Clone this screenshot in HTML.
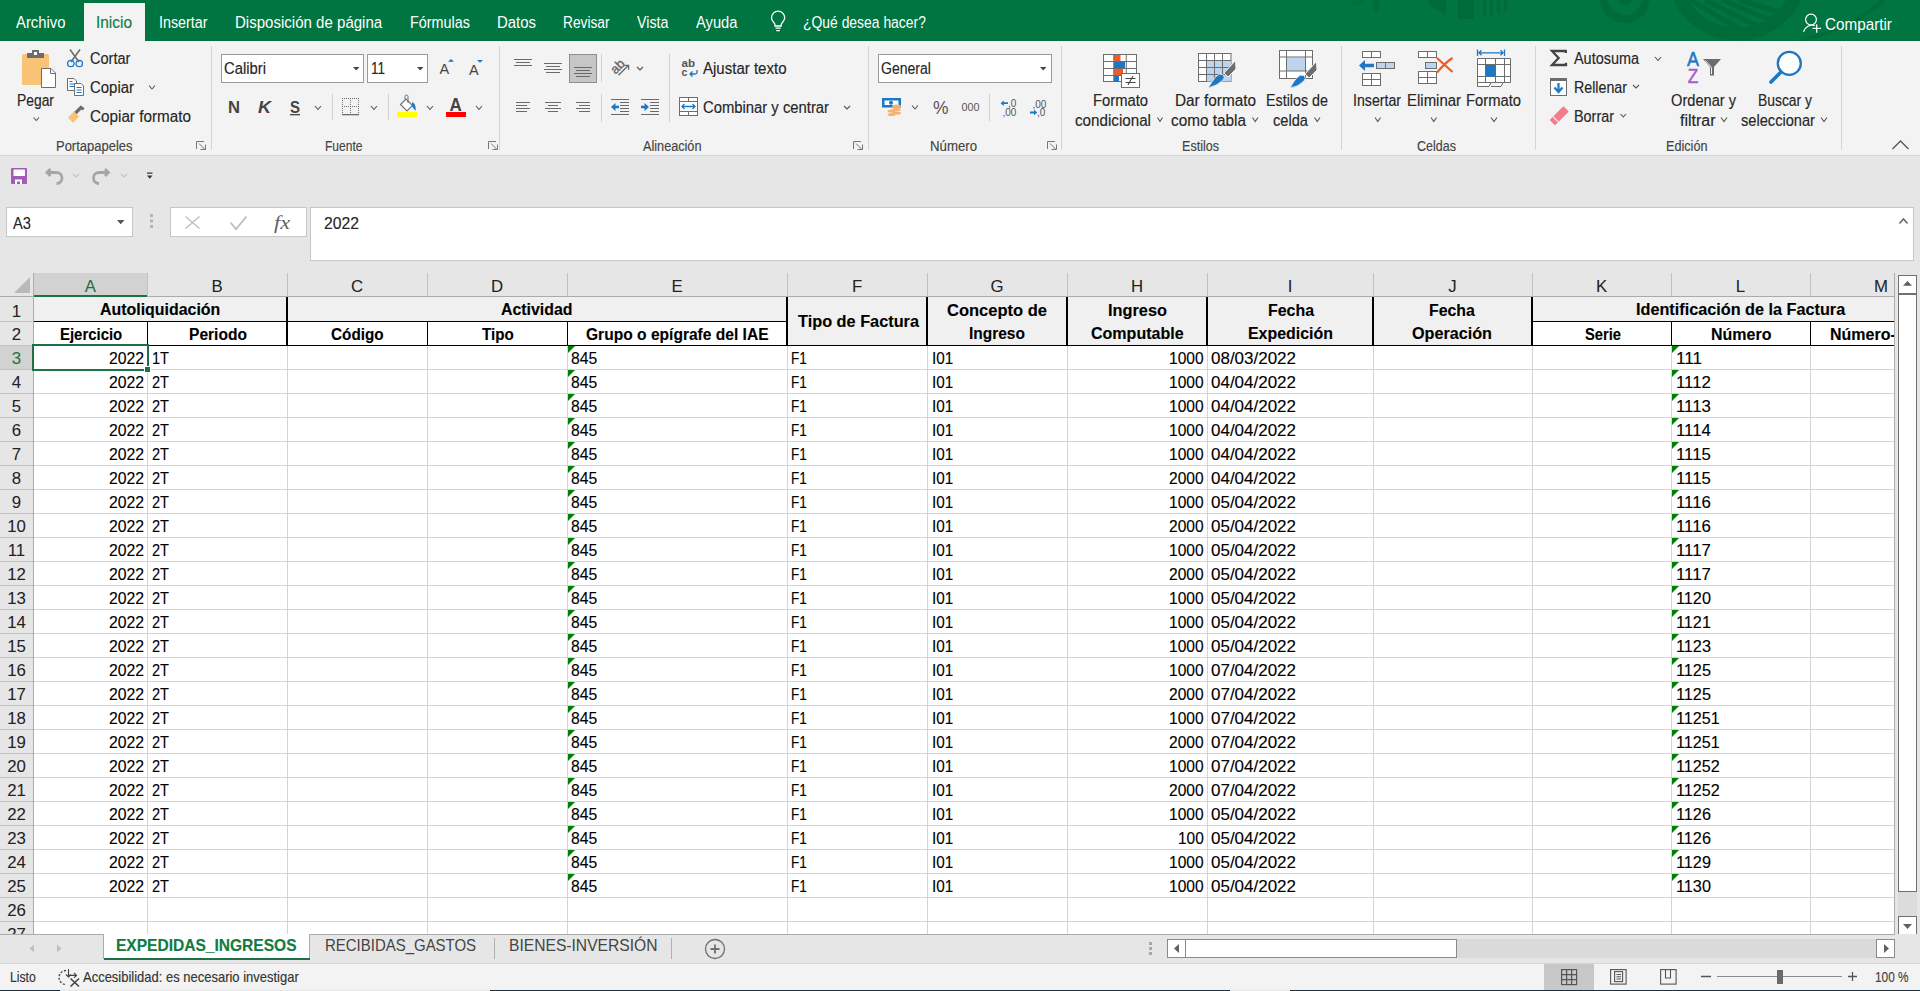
<!DOCTYPE html><html><head><meta charset="utf-8"><style>
html,body{margin:0;padding:0;width:1920px;height:991px;overflow:hidden;background:#e6e6e6;position:relative}
.t{position:absolute;white-space:nowrap;-webkit-text-stroke:0.3px currentColor;font-family:"Liberation Sans",sans-serif;transform-origin:0 0}
svg{position:absolute}
</style></head><body>
<div style="position:absolute;left:0px;top:0px;width:1920px;height:41px;background:#007542;"></div>
<svg style="left:0;top:0" width="1920" height="41"><g fill="none" stroke="#006b3a"><circle cx="1625" cy="-2" r="21" stroke-width="8"/><circle cx="1625" cy="-2" r="7" fill="#006b3a" stroke="none"/><circle cx="1737" cy="-30" r="64" stroke-width="13"/><path d="M1690 0 L1752 36 M1705 0 L1765 30 M1722 0 L1775 22 M1740 0 L1785 14" stroke-width="5"/><path d="M1884 0 Q1850 30 1796 42" stroke-width="4"/></g><g fill="#006b3a"><rect x="1373" y="0" width="6" height="11" rx="2"/><path d="M1429 0 H1446 V14 Q1436 10 1429 4Z"/><rect x="1458" y="0" width="16" height="19"/><rect x="1483" y="0" width="3" height="15"/><rect x="1490" y="0" width="3" height="15"/><rect x="1497" y="0" width="3" height="14"/><rect x="1504" y="0" width="3" height="11"/><rect x="1352" y="0" width="12" height="5" opacity=".6"/></g></svg>
<div style="position:absolute;left:84px;top:3px;width:61px;height:38px;background:#f3f3f3;"></div>
<div class="t" style="left:16.00px;top:14.20px;font-size:16.3px;line-height:16.3px;color:#ffffff;transform:scaleX(0.911);-webkit-text-stroke:0;">Archivo</div>
<div class="t" style="left:159.00px;top:14.20px;font-size:16.3px;line-height:16.3px;color:#ffffff;transform:scaleX(0.878);-webkit-text-stroke:0;">Insertar</div>
<div class="t" style="left:235.00px;top:14.20px;font-size:16.3px;line-height:16.3px;color:#ffffff;transform:scaleX(0.924);-webkit-text-stroke:0;">Disposición de página</div>
<div class="t" style="left:410.00px;top:14.20px;font-size:16.3px;line-height:16.3px;color:#ffffff;transform:scaleX(0.883);-webkit-text-stroke:0;">Fórmulas</div>
<div class="t" style="left:497.00px;top:14.20px;font-size:16.3px;line-height:16.3px;color:#ffffff;transform:scaleX(0.917);-webkit-text-stroke:0;">Datos</div>
<div class="t" style="left:563.00px;top:14.20px;font-size:16.3px;line-height:16.3px;color:#ffffff;transform:scaleX(0.842);-webkit-text-stroke:0;">Revisar</div>
<div class="t" style="left:637.00px;top:14.20px;font-size:16.3px;line-height:16.3px;color:#ffffff;transform:scaleX(0.874);-webkit-text-stroke:0;">Vista</div>
<div class="t" style="left:696.00px;top:14.20px;font-size:16.3px;line-height:16.3px;color:#ffffff;transform:scaleX(0.903);-webkit-text-stroke:0;">Ayuda</div>
<div class="t" style="left:802.50px;top:14.20px;font-size:16.3px;line-height:16.3px;color:#ffffff;transform:scaleX(0.854);-webkit-text-stroke:0;">¿Qué desea hacer?</div>
<div class="t" style="left:96.00px;top:14.20px;font-size:16.3px;line-height:16.3px;color:#107c41;transform:scaleX(0.946);-webkit-text-stroke-width:0.15px;">Inicio</div>
<div class="t" style="left:1825.00px;top:16.20px;font-size:16.3px;line-height:16.3px;color:#ffffff;transform:scaleX(0.936);-webkit-text-stroke:0;">Compartir</div>
<div style="position:absolute;left:0px;top:41px;width:1920px;height:114px;background:#f3f3f3;"></div>
<div style="position:absolute;left:0px;top:155px;width:1920px;height:1px;background:#d6d6d6;"></div>
<div style="position:absolute;left:211px;top:46px;width:1px;height:104px;background:#d4d4d4;"></div>
<div style="position:absolute;left:499px;top:46px;width:1px;height:104px;background:#d4d4d4;"></div>
<div style="position:absolute;left:868px;top:46px;width:1px;height:104px;background:#d4d4d4;"></div>
<div style="position:absolute;left:1061px;top:46px;width:1px;height:104px;background:#d4d4d4;"></div>
<div style="position:absolute;left:1341px;top:46px;width:1px;height:104px;background:#d4d4d4;"></div>
<div style="position:absolute;left:1535px;top:46px;width:1px;height:104px;background:#d4d4d4;"></div>
<div style="position:absolute;left:1841px;top:46px;width:1px;height:104px;background:#d4d4d4;"></div>
<div class="t" style="left:56.00px;top:139.15px;font-size:14px;line-height:14px;color:#444444;transform:scaleX(0.927);-webkit-text-stroke-width:0.15px;">Portapapeles</div>
<div class="t" style="left:325.00px;top:139.15px;font-size:14px;line-height:14px;color:#444444;transform:scaleX(0.860);-webkit-text-stroke-width:0.15px;">Fuente</div>
<div class="t" style="left:643.00px;top:139.15px;font-size:14px;line-height:14px;color:#444444;transform:scaleX(0.905);-webkit-text-stroke-width:0.15px;">Alineación</div>
<div class="t" style="left:930.00px;top:139.15px;font-size:14px;line-height:14px;color:#444444;transform:scaleX(0.944);-webkit-text-stroke-width:0.15px;">Número</div>
<div class="t" style="left:1182.00px;top:139.15px;font-size:14px;line-height:14px;color:#444444;transform:scaleX(0.897);-webkit-text-stroke-width:0.15px;">Estilos</div>
<div class="t" style="left:1417.00px;top:139.15px;font-size:14px;line-height:14px;color:#444444;transform:scaleX(0.894);-webkit-text-stroke-width:0.15px;">Celdas</div>
<div class="t" style="left:1666.00px;top:139.15px;font-size:14px;line-height:14px;color:#444444;transform:scaleX(0.904);-webkit-text-stroke-width:0.15px;">Edición</div>
<div class="t" style="left:17.00px;top:92.53px;font-size:15.8px;line-height:15.8px;color:#262626;transform:scaleX(0.877);-webkit-text-stroke-width:0.15px;">Pegar</div>
<div class="t" style="left:90.00px;top:51.03px;font-size:15.8px;line-height:15.8px;color:#262626;transform:scaleX(0.922);-webkit-text-stroke-width:0.15px;">Cortar</div>
<div class="t" style="left:90.00px;top:80.03px;font-size:15.8px;line-height:15.8px;color:#262626;transform:scaleX(0.946);-webkit-text-stroke-width:0.15px;">Copiar</div>
<div class="t" style="left:90.00px;top:109.03px;font-size:15.8px;line-height:15.8px;color:#262626;transform:scaleX(0.966);-webkit-text-stroke-width:0.15px;">Copiar formato</div>
<div style="position:absolute;left:221px;top:54px;width:143px;height:29px;background:#ffffff;box-sizing:border-box;border:1px solid #9a9a9a"></div>
<div style="position:absolute;left:367px;top:54px;width:61px;height:29px;background:#ffffff;box-sizing:border-box;border:1px solid #9a9a9a"></div>
<div class="t" style="left:224.00px;top:61.03px;font-size:15.8px;line-height:15.8px;color:#262626;transform:scaleX(0.938);-webkit-text-stroke-width:0.15px;">Calibri</div>
<div class="t" style="left:370.50px;top:61.03px;font-size:15.8px;line-height:15.8px;color:#262626;transform:scaleX(0.852);-webkit-text-stroke-width:0.15px;">11</div>
<div style="position:absolute;left:878px;top:54px;width:174px;height:29px;background:#ffffff;box-sizing:border-box;border:1px solid #9a9a9a"></div>
<div class="t" style="left:881.00px;top:61.03px;font-size:15.8px;line-height:15.8px;color:#262626;transform:scaleX(0.889);-webkit-text-stroke-width:0.15px;">General</div>
<div class="t" style="left:703.00px;top:61.03px;font-size:15.8px;line-height:15.8px;color:#262626;transform:scaleX(0.951);-webkit-text-stroke-width:0.15px;">Ajustar texto</div>
<div class="t" style="left:703.00px;top:99.53px;font-size:15.8px;line-height:15.8px;color:#262626;transform:scaleX(0.938);-webkit-text-stroke-width:0.15px;">Combinar y centrar</div>
<div class="t" style="left:1092.50px;top:92.53px;font-size:15.8px;line-height:15.8px;color:#262626;transform:scaleX(0.935);-webkit-text-stroke-width:0.15px;">Formato</div>
<div class="t" style="left:1074.50px;top:112.53px;font-size:15.8px;line-height:15.8px;color:#262626;transform:scaleX(0.961);-webkit-text-stroke-width:0.15px;">condicional</div>
<div class="t" style="left:1174.50px;top:92.53px;font-size:15.8px;line-height:15.8px;color:#262626;transform:scaleX(0.971);-webkit-text-stroke-width:0.15px;">Dar formato</div>
<div class="t" style="left:1170.50px;top:112.53px;font-size:15.8px;line-height:15.8px;color:#262626;transform:scaleX(0.970);-webkit-text-stroke-width:0.15px;">como tabla</div>
<div class="t" style="left:1265.50px;top:92.53px;font-size:15.8px;line-height:15.8px;color:#262626;transform:scaleX(0.905);-webkit-text-stroke-width:0.15px;">Estilos de</div>
<div class="t" style="left:1272.50px;top:112.53px;font-size:15.8px;line-height:15.8px;color:#262626;transform:scaleX(0.925);-webkit-text-stroke-width:0.15px;">celda</div>
<div class="t" style="left:1353.00px;top:92.53px;font-size:15.8px;line-height:15.8px;color:#262626;transform:scaleX(0.896);-webkit-text-stroke-width:0.15px;">Insertar</div>
<div class="t" style="left:1407.00px;top:92.53px;font-size:15.8px;line-height:15.8px;color:#262626;transform:scaleX(0.947);-webkit-text-stroke-width:0.15px;">Eliminar</div>
<div class="t" style="left:1466.00px;top:92.53px;font-size:15.8px;line-height:15.8px;color:#262626;transform:scaleX(0.935);-webkit-text-stroke-width:0.15px;">Formato</div>
<div class="t" style="left:1574.00px;top:51.03px;font-size:15.8px;line-height:15.8px;color:#262626;transform:scaleX(0.913);-webkit-text-stroke-width:0.15px;">Autosuma</div>
<div class="t" style="left:1574.00px;top:80.03px;font-size:15.8px;line-height:15.8px;color:#262626;transform:scaleX(0.901);-webkit-text-stroke-width:0.15px;">Rellenar</div>
<div class="t" style="left:1574.00px;top:109.03px;font-size:15.8px;line-height:15.8px;color:#262626;transform:scaleX(0.911);-webkit-text-stroke-width:0.15px;">Borrar</div>
<div class="t" style="left:1671.00px;top:92.53px;font-size:15.8px;line-height:15.8px;color:#262626;transform:scaleX(0.926);-webkit-text-stroke-width:0.15px;">Ordenar y</div>
<div class="t" style="left:1679.50px;top:112.53px;font-size:15.8px;line-height:15.8px;color:#262626;transform:scaleX(1.012);-webkit-text-stroke-width:0.15px;">filtrar</div>
<div class="t" style="left:1758.00px;top:92.53px;font-size:15.8px;line-height:15.8px;color:#262626;transform:scaleX(0.879);-webkit-text-stroke-width:0.15px;">Buscar y</div>
<div class="t" style="left:1741.00px;top:112.53px;font-size:15.8px;line-height:15.8px;color:#262626;transform:scaleX(0.926);-webkit-text-stroke-width:0.15px;">seleccionar</div>
<div style="position:absolute;left:0px;top:156px;width:1920px;height:117px;background:#e6e6e6;"></div>
<div style="position:absolute;left:6px;top:207px;width:127px;height:30px;background:#ffffff;box-sizing:border-box;border:1px solid #c6c6c6"></div>
<div class="t" style="left:13.30px;top:215.33px;font-size:16.5px;line-height:16.5px;color:#262626;transform:scaleX(0.888);-webkit-text-stroke-width:0.15px;">A3</div>
<div style="position:absolute;left:170px;top:207px;width:137px;height:30px;background:#ffffff;box-sizing:border-box;border:1px solid #c6c6c6"></div>
<div style="position:absolute;left:310px;top:207px;width:1604px;height:54px;background:#ffffff;box-sizing:border-box;border:1px solid #c6c6c6"></div>
<div class="t" style="left:324.25px;top:214.73px;font-size:16.5px;line-height:16.5px;color:#262626;transform:scaleX(0.953);-webkit-text-stroke-width:0.15px;">2022</div>
<svg style="left:0;top:0" width="1920" height="273"><g fill="none" stroke="#ffffff" stroke-width="1.3"><path d="M775 26 V24.5 C775 22.8 771.5 21.5 771.5 17.8 A6.6 6.6 0 0 1 784.7 17.8 C784.7 21.5 781.2 22.8 781.2 24.5 V26 Z"/><path d="M775.5 28.2h5.2M776.3 30.6h3.6"/></g><g fill="none" stroke="#ffffff" stroke-width="1.2"><circle cx="1811" cy="19.6" r="5.4"/><path d="M1803.5 31.8 A9.5 9.5 0 0 1 1815 25.5"/><path d="M1812.5 28.4h8.5M1816.7 24.2v8.5"/></g><rect x="22" y="54" width="27" height="31" rx="1.5" fill="#f8c374"/><path d="M27 58 V53 H32 V50 H39 V53 H44 V58 Z" fill="#6d6d6d"/><rect x="34" y="52" width="3" height="3" fill="#fff"/><path d="M41.5 68.5 H51 L55.5 73 V87.5 H41.5 Z" fill="#fff" stroke="#6d6d6d" stroke-width="1"/><path d="M50.5 68.5 V73.5 H55.5" fill="none" stroke="#6d6d6d" stroke-width="1"/><path d="M33.5 117.5 L36.25 120.5 L39 117.5" fill="none" stroke="#555" stroke-width="1.1"/><path d="M70 49.5 L79 62 M80 49.5 L71 62" stroke="#6d6d6d" stroke-width="1.6"/><circle cx="70.8" cy="63.5" r="3.2" fill="none" stroke="#1e77c2" stroke-width="1.3"/><circle cx="79.3" cy="63.5" r="3.2" fill="none" stroke="#1e77c2" stroke-width="1.3"/><path d="M67.5 78.5 H74 L76.5 81 V90.5 H67.5 Z" fill="#fff" stroke="#6d6d6d" stroke-width="1"/><path d="M74.5 83.5 H81 L83.5 86 V95.5 H74.5 Z" fill="#fff" stroke="#6d6d6d" stroke-width="1"/><path d="M69.5 81.5h3M69.5 84h5M69.5 86.5h5M76.5 87.5h5M76.5 90h5M76.5 92.5h5" stroke="#1e77c2" stroke-width="1"/><path d="M149 85.5 L152.0 89 L155 85.5" fill="none" stroke="#555" stroke-width="1.1"/><path d="M68 117.5 L74 111.5 L79 116.5 L73 123 Z" fill="#f8c374"/><path d="M75.5 113 L82 106.5" stroke="#6d6d6d" stroke-width="3.2"/><rect x="81" y="107" width="3" height="3" fill="#6d6d6d" transform="rotate(45 82.5 108.5)"/><g fill="none" stroke="#777" stroke-width="1"><path d="M196.5 149 V141.5 H204"/><path d="M199 143.5 L205 149.5 M205.5 144.5 V149.5 H200.5"/></g><g fill="none" stroke="#777" stroke-width="1"><path d="M488.5 149 V141.5 H496"/><path d="M491 143.5 L497 149.5 M497.5 144.5 V149.5 H492.5"/></g><g fill="none" stroke="#777" stroke-width="1"><path d="M853.5 149 V141.5 H861"/><path d="M856 143.5 L862 149.5 M862.5 144.5 V149.5 H857.5"/></g><g fill="none" stroke="#777" stroke-width="1"><path d="M1047.5 149 V141.5 H1055"/><path d="M1050 143.5 L1056 149.5 M1056.5 144.5 V149.5 H1051.5"/></g><path d="M1892.5 149 L1900.5 141 L1908.5 149" fill="none" stroke="#555" stroke-width="1.3"/><path d="M353 67 H359.5 L356.25 70.5 Z" fill="#444"/><path d="M417 67 H423.5 L420.25 70.5 Z" fill="#444"/><path d="M1040 67 H1046.5 L1043.25 70.5 Z" fill="#444"/><text x="439.5" y="74" font-family="Liberation Sans" font-size="14.5" fill="#444444">A</text><path d="M448 61.8 L451 59 L454 61.8Z" fill="#1e77c2"/><text x="469" y="74.6" font-family="Liberation Sans" font-size="14.5" fill="#444444">A</text><path d="M477 60 H483 L480 62.8Z" fill="#1e77c2"/><text x="228" y="113" font-family="Liberation Sans" font-weight="bold" font-size="17" fill="#444444" textLength="12" lengthAdjust="spacingAndGlyphs">N</text><text x="258" y="113" font-family="Liberation Sans" font-weight="bold" font-style="italic" font-size="17" fill="#444444" textLength="13" lengthAdjust="spacingAndGlyphs">K</text><text x="290" y="113" font-family="Liberation Sans" font-weight="bold" font-size="17" fill="#444444" textLength="10" lengthAdjust="spacingAndGlyphs">S</text><rect x="290" y="114" width="10" height="1.3" fill="#444444"/><path d="M315 106 L318.0 109.5 L321 106" fill="none" stroke="#555" stroke-width="1.1"/><path d="M371 106 L374.0 109.5 L377 106" fill="none" stroke="#555" stroke-width="1.1"/><path d="M427 106 L430.0 109.5 L433 106" fill="none" stroke="#555" stroke-width="1.1"/><path d="M476 106 L479.0 109.5 L482 106" fill="none" stroke="#555" stroke-width="1.1"/><rect x="332" y="94" width="1" height="26" fill="#d0d0d0"/><rect x="388" y="94" width="1" height="26" fill="#d0d0d0"/><g fill="#6d6d6d"><rect x="342" y="98" width="1" height="1"/><rect x="342" y="106" width="1" height="1"/><rect x="344" y="98" width="1" height="1"/><rect x="344" y="106" width="1" height="1"/><rect x="346" y="98" width="1" height="1"/><rect x="346" y="106" width="1" height="1"/><rect x="348" y="98" width="1" height="1"/><rect x="348" y="106" width="1" height="1"/><rect x="350" y="98" width="1" height="1"/><rect x="350" y="106" width="1" height="1"/><rect x="352" y="98" width="1" height="1"/><rect x="352" y="106" width="1" height="1"/><rect x="354" y="98" width="1" height="1"/><rect x="354" y="106" width="1" height="1"/><rect x="356" y="98" width="1" height="1"/><rect x="356" y="106" width="1" height="1"/><rect x="358" y="98" width="1" height="1"/><rect x="358" y="106" width="1" height="1"/><rect x="342" y="98" width="1" height="1"/><rect x="350" y="98" width="1" height="1"/><rect x="358" y="98" width="1" height="1"/><rect x="342" y="100" width="1" height="1"/><rect x="350" y="100" width="1" height="1"/><rect x="358" y="100" width="1" height="1"/><rect x="342" y="102" width="1" height="1"/><rect x="350" y="102" width="1" height="1"/><rect x="358" y="102" width="1" height="1"/><rect x="342" y="104" width="1" height="1"/><rect x="350" y="104" width="1" height="1"/><rect x="358" y="104" width="1" height="1"/><rect x="342" y="106" width="1" height="1"/><rect x="350" y="106" width="1" height="1"/><rect x="358" y="106" width="1" height="1"/><rect x="342" y="108" width="1" height="1"/><rect x="350" y="108" width="1" height="1"/><rect x="358" y="108" width="1" height="1"/><rect x="342" y="110" width="1" height="1"/><rect x="350" y="110" width="1" height="1"/><rect x="358" y="110" width="1" height="1"/><rect x="342" y="112" width="1" height="1"/><rect x="350" y="112" width="1" height="1"/><rect x="358" y="112" width="1" height="1"/><rect x="342" y="114" width="17" height="1.3"/></g><path d="M400.5 104.5 L406 99 L412.5 105.5 L407 111 Z" fill="#fff" stroke="#6d6d6d" stroke-width="1.1"/><path d="M405 99 V96.5 A1.5 1.5 0 0 1 408 96.5 V103" fill="none" stroke="#6d6d6d" stroke-width="1"/><path d="M412 102 Q416.5 104 415.5 111 Q413 108 412 106Z" fill="#1e77c2"/><rect x="397" y="112" width="20" height="5" fill="#ffff00"/><text x="449.5" y="110.8" font-family="Liberation Sans" font-weight="bold" font-size="17.5" fill="#444444" textLength="12.3" lengthAdjust="spacingAndGlyphs">A</text><rect x="446" y="112" width="20" height="5" fill="#ff0000"/><rect x="514" y="59" width="18" height="1" fill="#6a6a6a"/><rect x="516" y="62" width="14" height="1" fill="#6a6a6a"/><rect x="514" y="65" width="18" height="1" fill="#6a6a6a"/><rect x="544" y="63" width="18" height="1" fill="#6a6a6a"/><rect x="546" y="66" width="14" height="1" fill="#6a6a6a"/><rect x="544" y="69" width="18" height="1" fill="#6a6a6a"/><rect x="546" y="72" width="14" height="1" fill="#6a6a6a"/><rect x="569.5" y="54.5" width="27" height="28" fill="#c6c6c6" stroke="#8f8f8f" stroke-width="1"/><rect x="574" y="67" width="18" height="1" fill="#6a6a6a"/><rect x="576" y="70" width="14" height="1" fill="#6a6a6a"/><rect x="574" y="73" width="18" height="1" fill="#6a6a6a"/><rect x="576" y="76" width="14" height="1" fill="#6a6a6a"/><rect x="601" y="54" width="1" height="28" fill="#d0d0d0"/><rect x="601" y="94" width="1" height="28" fill="#d0d0d0"/><rect x="669" y="54" width="1" height="68" fill="#d0d0d0"/><rect x="989" y="94" width="1" height="27" fill="#d0d0d0"/><rect x="516" y="102" width="14" height="1" fill="#6a6a6a"/><rect x="516" y="105" width="11" height="1" fill="#6a6a6a"/><rect x="516" y="108" width="14" height="1" fill="#6a6a6a"/><rect x="516" y="111" width="11" height="1" fill="#6a6a6a"/><rect x="545" y="102" width="16" height="1" fill="#6a6a6a"/><rect x="548" y="105" width="10" height="1" fill="#6a6a6a"/><rect x="545" y="108" width="16" height="1" fill="#6a6a6a"/><rect x="548" y="111" width="10" height="1" fill="#6a6a6a"/><rect x="576" y="102" width="14" height="1" fill="#6a6a6a"/><rect x="579" y="105" width="11" height="1" fill="#6a6a6a"/><rect x="576" y="108" width="14" height="1" fill="#6a6a6a"/><rect x="579" y="111" width="11" height="1" fill="#6a6a6a"/><rect x="611" y="99" width="18" height="1" fill="#6a6a6a"/><rect x="620" y="102" width="9" height="1" fill="#6a6a6a"/><rect x="620" y="105" width="9" height="1" fill="#6a6a6a"/><rect x="620" y="108" width="9" height="1" fill="#6a6a6a"/><rect x="620" y="111" width="9" height="1" fill="#6a6a6a"/><rect x="611" y="114" width="18" height="1" fill="#6a6a6a"/><rect x="641" y="99" width="18" height="1" fill="#6a6a6a"/><rect x="650" y="102" width="9" height="1" fill="#6a6a6a"/><rect x="650" y="105" width="9" height="1" fill="#6a6a6a"/><rect x="650" y="108" width="9" height="1" fill="#6a6a6a"/><rect x="650" y="111" width="9" height="1" fill="#6a6a6a"/><rect x="641" y="114" width="18" height="1" fill="#6a6a6a"/><path d="M611 107 L615.5 103 V105.8 H619 V108.2 H615.5 V111 Z" fill="#1e77c2"/><path d="M649 107 L644.5 103 V105.8 H641 V108.2 H644.5 V111 Z" fill="#1e77c2"/><g transform="rotate(-45 617.5 66.5)"><text x="617.5" y="70.8" text-anchor="middle" font-family="Liberation Sans" font-size="13" fill="#666" stroke="#666" stroke-width=".35">ab</text></g><path d="M618.5 75.2 L628.3 65.5 M624.2 65.4 H628.6 V69.8" fill="none" stroke="#666" stroke-width="1.3"/><path d="M637 67 L640.0 70 L643 67" fill="none" stroke="#555" stroke-width="1.1"/><text x="681.5" y="67.3" font-family="Liberation Sans" font-weight="bold" font-size="10.5" fill="#555" textLength="13.5" lengthAdjust="spacingAndGlyphs">ab</text><text x="681.5" y="75.5" font-family="Liberation Sans" font-weight="bold" font-size="10.5" fill="#555">c</text><path d="M697 70 V72.5 Q697 74 695 74 H690 M692.5 71.5 L690 74 L692.5 76.5" fill="none" stroke="#1e77c2" stroke-width="1.3"/><rect x="679.5" y="97.5" width="18" height="18" fill="#fff" stroke="#6d6d6d" stroke-width="1"/><path d="M680 101.5 H697 M680 111.5 H697 M688.5 98 V101.5 M688.5 111.5 V115" stroke="#6d6d6d" stroke-width="1"/><path d="M682 106.5 H695 M684.5 104 L682 106.5 L684.5 109 M692.5 104 L695 106.5 L692.5 109" fill="none" stroke="#1e77c2" stroke-width="1.3"/><path d="M844 106 L847.0 109 L850 106" fill="none" stroke="#555" stroke-width="1.1"/><rect x="882" y="98" width="19" height="9.5" fill="#1e77c2"/><rect x="884.5" y="100.5" width="14" height="4.5" fill="#fff"/><circle cx="891" cy="102.8" r="2" fill="#1e77c2"/><g fill="#f6b26b"><ellipse cx="896.5" cy="106" rx="4.5" ry="1.6"/><ellipse cx="896.5" cy="109.5" rx="4.5" ry="1.6"/><ellipse cx="891.5" cy="111" rx="4" ry="1.6"/><ellipse cx="891.5" cy="114.5" rx="4" ry="1.6"/><ellipse cx="896.5" cy="113" rx="4.5" ry="1.6"/></g><path d="M912 105.5 L915.0 109 L918 105.5" fill="none" stroke="#555" stroke-width="1.1"/><text x="933" y="114" font-family="Liberation Sans" font-size="18" fill="#555" textLength="15.5" lengthAdjust="spacingAndGlyphs">%</text><text x="961.5" y="111" font-family="Liberation Sans" font-size="11" fill="#555" textLength="18" lengthAdjust="spacingAndGlyphs">000</text><text x="1008" y="106.5" font-family="Liberation Sans" font-size="10" fill="#555">,0</text><text x="1002.5" y="116" font-family="Liberation Sans" font-size="10" fill="#555">,00</text><path d="M1000.5 103.2 L1003.8 100.5 V102.3 H1008 V104.1 H1003.8 V106 Z" fill="#1e77c2"/><text x="1032.5" y="107.5" font-family="Liberation Sans" font-size="10" fill="#555">,00</text><text x="1037" y="116" font-family="Liberation Sans" font-size="10" fill="#555">,0</text><path d="M1037.3 112.5 L1034 109.8 V111.6 H1030 V113.4 H1034 V115.2 Z" fill="#1e77c2"/><rect x="1103.5" y="54.5" width="33" height="27" fill="#fff" stroke="#6d6d6d" stroke-width="1"/><rect x="1114" y="55" width="6.5" height="6.5" fill="#f05a28"/><rect x="1114" y="62" width="11" height="6.5" fill="#1e77c2"/><rect x="1114" y="69" width="9" height="6.5" fill="#f05a28"/><rect x="1114" y="76" width="5" height="5.5" fill="#1e77c2"/><path d="M1104 61.5 H1136 M1104 68.5 H1136 M1104 75.5 H1136 M1113.75 55 V81 M1126.25 55 V81" stroke="#6d6d6d" stroke-width="1" fill="none"/><rect x="1121.5" y="73.5" width="18" height="14" fill="#fff" stroke="#6d6d6d" stroke-width="1"/><path d="M1125.5 78.5 H1135.5 M1125.5 82.5 H1135.5 M1133 76 L1128 85" stroke="#444" stroke-width="1.1"/><rect x="1198.5" y="53.5" width="32.5" height="28" fill="#fff" stroke="#6d6d6d" stroke-width="1"/><rect x="1207" y="60.5" width="24" height="21" fill="#bcd5ec"/><path d="M1199 60.5 H1231 M1199 67.5 H1231 M1199 74.5 H1231 M1206.5 54 V81 M1214.5 54 V81 M1222.5 54 V81" stroke="#6d6d6d" stroke-width="1" fill="none"/><path d="M1235.5 60.5 L1236 69 L1228 77 L1224 73 Z" fill="#6d6d6d" stroke="#f3f3f3" stroke-width="1"/><path d="M1223 74.5 Q1225.5 77.5 1223 80 Q1217 86 1208 88 Q1213 80 1216 76.5 Q1219.5 73 1223 74.5Z" fill="#1e77c2" stroke="#f3f3f3" stroke-width=".8"/><rect x="1279.5" y="50.5" width="33" height="28" fill="#fff" stroke="#6d6d6d" stroke-width="1"/><rect x="1287" y="57.5" width="18" height="13.5" fill="#bcd5ec"/><path d="M1280 57 H1312 M1280 71 H1312 M1286.5 51 V78 M1305.5 51 V78" stroke="#6d6d6d" stroke-width="1" fill="none"/><path d="M1316.5 61.5 L1317 70 L1309 78 L1305 74 Z" fill="#6d6d6d" stroke="#f3f3f3" stroke-width="1"/><path d="M1304 75.5 Q1306.5 78.5 1304 81 Q1298 87 1290 88 Q1294 81 1297 77.5 Q1300.5 74 1304 75.5Z" fill="#1e77c2" stroke="#f3f3f3" stroke-width=".8"/><path d="M1157.5 117.5 L1160.0 121.5 L1162.5 117.5" fill="none" stroke="#555" stroke-width="1.1"/><path d="M1252.5 117.5 L1255.25 121.5 L1258 117.5" fill="none" stroke="#555" stroke-width="1.1"/><path d="M1314.5 117.5 L1317.25 121.5 L1320 117.5" fill="none" stroke="#555" stroke-width="1.1"/><path d="M1375 117.5 L1377.75 121.5 L1380.5 117.5" fill="none" stroke="#555" stroke-width="1.1"/><path d="M1431 117.5 L1433.75 121.5 L1436.5 117.5" fill="none" stroke="#555" stroke-width="1.1"/><path d="M1491 117.5 L1494.0 121.5 L1497 117.5" fill="none" stroke="#555" stroke-width="1.1"/><g fill="#fff" stroke="#6d6d6d" stroke-width="1"><rect x="1362.5" y="51.5" width="18" height="6"/><rect x="1362.5" y="73.5" width="18" height="12"/></g><path d="M1371.5 52 V57 M1363 79.5 H1380 M1371.5 74 V85" stroke="#6d6d6d" stroke-width="1"/><rect x="1376.5" y="62.5" width="18" height="6" fill="#bcd5ec" stroke="#6d6d6d" stroke-width="1"/><path d="M1385.5 63 V68" stroke="#6d6d6d" stroke-width="1"/><path d="M1359 65.5 L1365 60 V63.8 H1374 V67.2 H1365 V71 Z" fill="#1e77c2"/><g fill="#fff" stroke="#6d6d6d" stroke-width="1"><rect x="1418.5" y="51.5" width="18" height="6"/><rect x="1418.5" y="71.5" width="18" height="12"/></g><path d="M1427.5 52 V57 M1419 77.5 H1436 M1427.5 72 V83" stroke="#6d6d6d" stroke-width="1"/><rect x="1425.5" y="62.5" width="11" height="6" fill="#bcd5ec" stroke="#6d6d6d" stroke-width="1"/><path d="M1437 58 L1452.5 72 M1452.5 58 Q1445 63 1437 72.5" stroke="#f05a28" stroke-width="2.2" fill="none"/><path d="M1477.5 49.5 V56 M1504.5 49.5 V56 M1479 52.8 H1503 M1481.5 50.3 L1479 52.8 L1481.5 55.3 M1500.5 50.3 L1503 52.8 L1500.5 55.3" stroke="#1e77c2" stroke-width="1.3" fill="none"/><path d="M1477.5 58.5 H1510.5 V82.5 H1477.5 Z M1477.5 82.5 V86.5 H1489 L1491 82.5 M1491 86.5 H1501 L1503 82.5" fill="#fff" stroke="#6d6d6d" stroke-width="1"/><path d="M1478 64.5 H1510 M1478 76.5 H1510 M1485.5 59 V82 M1495.5 59 V82 M1504.5 59 V82" stroke="#6d6d6d" stroke-width="1"/><rect x="1486" y="65" width="9.5" height="11.5" fill="#1e77c2"/><path d="M1565.8 53 V51 H1552 L1558.6 58 L1552 65 H1566 V62.8" fill="none" stroke="#444444" stroke-width="2.3" stroke-linejoin="miter"/><path d="M1655 57 L1658.0 60.5 L1661 57" fill="none" stroke="#555" stroke-width="1.1"/><rect x="1550.5" y="78.5" width="16" height="17" fill="#fff" stroke="#6d6d6d" stroke-width="1"/><rect x="1550" y="78" width="17" height="3" fill="#6d6d6d"/><path d="M1558.5 83 V91 M1554.5 87.5 L1558.5 92 L1562.5 87.5" fill="none" stroke="#1e77c2" stroke-width="2.2"/><path d="M1633 85 L1636.0 88 L1639 85" fill="none" stroke="#555" stroke-width="1.1"/><g transform="rotate(-45 1559 116)"><rect x="1549.5" y="112.2" width="19.5" height="7.6" rx=".8" fill="#f47c8c"/><rect x="1553.8" y="112.2" width="1" height="7.6" fill="#fff"/></g><path d="M1620.5 114 L1623.25 117 L1626 114" fill="none" stroke="#555" stroke-width="1.1"/><text x="1687" y="65.8" font-family="Liberation Sans" font-size="19.5" fill="#1e77c2" stroke="#1e77c2" stroke-width=".5" textLength="12" lengthAdjust="spacingAndGlyphs">A</text><text x="1687.8" y="82.6" font-family="Liberation Sans" font-size="19.5" fill="#a85cc5" stroke="#a85cc5" stroke-width=".5" textLength="10.5" lengthAdjust="spacingAndGlyphs">Z</text><path d="M1703 59 H1721 L1714 67 V75.5 H1710 V67 Z" fill="#6d6d6d"/><path d="M1705.5 60.5 L1711.5 67.5 V74" fill="none" stroke="#fff" stroke-width=".9"/><path d="M1721 117.5 L1724.0 121.5 L1727 117.5" fill="none" stroke="#555" stroke-width="1.1"/><circle cx="1789.3" cy="63.4" r="11.5" fill="#fff" stroke="#1e77c2" stroke-width="2.3"/><path d="M1781 72 L1771 82" stroke="#1e77c2" stroke-width="3.6" stroke-linecap="round"/><path d="M1821 117.5 L1824.0 121.5 L1827 117.5" fill="none" stroke="#555" stroke-width="1.1"/><rect x="11" y="168" width="16" height="16" rx="1" fill="#a45ab7"/><rect x="13.5" y="169.5" width="11.5" height="6.5" fill="#fff"/><path d="M15 184 V179.5 H22 V184 M17 184 V181.5 H20 V184" fill="#fff"/><rect x="17" y="181.5" width="3" height="2.5" fill="#a45ab7"/><path d="M47 172.5 H56.5 A5.5 5.5 0 0 1 56.5 183.5 M50.5 169 L47 172.5 L50.5 176" fill="none" stroke="#a6a6a6" stroke-width="2.8"/><path d="M108.5 172.5 H99 A5.5 5.5 0 0 0 99 183.5 M105 169 L108.5 172.5 L105 176" fill="none" stroke="#a6a6a6" stroke-width="2.8"/><path d="M73 174 L76.0 177 L79 174" fill="none" stroke="#c4c4c4" stroke-width="1.1"/><path d="M121 174 L124.0 177 L127 174" fill="none" stroke="#c4c4c4" stroke-width="1.1"/><rect x="147" y="172.5" width="5.5" height="1.2" fill="#333"/><path d="M147 175.5 H152.5 L149.75 178.8Z" fill="#333"/><path d="M117 220 H124.5 L120.75 224.3Z" fill="#555"/><g fill="#b4b4b4"><rect x="150" y="214" width="3" height="3"/><rect x="150" y="219.5" width="3" height="3"/><rect x="150" y="225" width="3" height="3"/></g><path d="M185.5 216.5 L199.5 228.5 M199.5 216.5 L185.5 228.5" stroke="#bdbdbd" stroke-width="1.3"/><path d="M230.5 222.5 L236 229 L246.5 216.5" fill="none" stroke="#bdbdbd" stroke-width="1.8"/><text x="274" y="228.5" font-family="Liberation Serif" font-style="italic" font-size="19" fill="#5f5f5f" textLength="16" lengthAdjust="spacingAndGlyphs">fx</text><path d="M1899.5 223.5 L1903.5 219 L1907.5 223.5" fill="none" stroke="#666" stroke-width="1.5"/></svg>
<div style="position:absolute;left:0px;top:273px;width:1894px;height:23px;background:#e6e6e6;"></div>
<div style="position:absolute;left:0px;top:273px;width:33px;height:661px;background:#e6e6e6;"></div>
<div style="position:absolute;left:34px;top:297px;width:1860px;height:637px;background:#ffffff;"></div>
<div style="position:absolute;left:34px;top:273px;width:113px;height:22px;background:#d2d2d2;"></div>
<div style="position:absolute;left:0px;top:346px;width:33px;height:23px;background:#d2d2d2;"></div>
<div style="position:absolute;left:147px;top:273px;width:1px;height:23px;background:#c0c0c0;"></div>
<div style="position:absolute;left:287px;top:273px;width:1px;height:23px;background:#c0c0c0;"></div>
<div style="position:absolute;left:427px;top:273px;width:1px;height:23px;background:#c0c0c0;"></div>
<div style="position:absolute;left:567px;top:273px;width:1px;height:23px;background:#c0c0c0;"></div>
<div style="position:absolute;left:787px;top:273px;width:1px;height:23px;background:#c0c0c0;"></div>
<div style="position:absolute;left:927px;top:273px;width:1px;height:23px;background:#c0c0c0;"></div>
<div style="position:absolute;left:1067px;top:273px;width:1px;height:23px;background:#c0c0c0;"></div>
<div style="position:absolute;left:1207px;top:273px;width:1px;height:23px;background:#c0c0c0;"></div>
<div style="position:absolute;left:1373px;top:273px;width:1px;height:23px;background:#c0c0c0;"></div>
<div style="position:absolute;left:1532px;top:273px;width:1px;height:23px;background:#c0c0c0;"></div>
<div style="position:absolute;left:1671px;top:273px;width:1px;height:23px;background:#c0c0c0;"></div>
<div style="position:absolute;left:1810px;top:273px;width:1px;height:23px;background:#c0c0c0;"></div>
<div style="position:absolute;left:0px;top:296px;width:1894px;height:1px;background:#ababab;"></div>
<div style="position:absolute;left:33px;top:273px;width:1px;height:661px;background:#ababab;"></div>
<div style="position:absolute;left:34px;top:295px;width:113px;height:2px;background:#1e7145;"></div>
<div style="position:absolute;left:0px;top:321px;width:33px;height:1px;background:#c0c0c0;"></div>
<div style="position:absolute;left:0px;top:345px;width:33px;height:1px;background:#c0c0c0;"></div>
<div style="position:absolute;left:0px;top:369px;width:33px;height:1px;background:#c0c0c0;"></div>
<div style="position:absolute;left:0px;top:393px;width:33px;height:1px;background:#c0c0c0;"></div>
<div style="position:absolute;left:0px;top:417px;width:33px;height:1px;background:#c0c0c0;"></div>
<div style="position:absolute;left:0px;top:441px;width:33px;height:1px;background:#c0c0c0;"></div>
<div style="position:absolute;left:0px;top:465px;width:33px;height:1px;background:#c0c0c0;"></div>
<div style="position:absolute;left:0px;top:489px;width:33px;height:1px;background:#c0c0c0;"></div>
<div style="position:absolute;left:0px;top:513px;width:33px;height:1px;background:#c0c0c0;"></div>
<div style="position:absolute;left:0px;top:537px;width:33px;height:1px;background:#c0c0c0;"></div>
<div style="position:absolute;left:0px;top:561px;width:33px;height:1px;background:#c0c0c0;"></div>
<div style="position:absolute;left:0px;top:585px;width:33px;height:1px;background:#c0c0c0;"></div>
<div style="position:absolute;left:0px;top:609px;width:33px;height:1px;background:#c0c0c0;"></div>
<div style="position:absolute;left:0px;top:633px;width:33px;height:1px;background:#c0c0c0;"></div>
<div style="position:absolute;left:0px;top:657px;width:33px;height:1px;background:#c0c0c0;"></div>
<div style="position:absolute;left:0px;top:681px;width:33px;height:1px;background:#c0c0c0;"></div>
<div style="position:absolute;left:0px;top:705px;width:33px;height:1px;background:#c0c0c0;"></div>
<div style="position:absolute;left:0px;top:729px;width:33px;height:1px;background:#c0c0c0;"></div>
<div style="position:absolute;left:0px;top:753px;width:33px;height:1px;background:#c0c0c0;"></div>
<div style="position:absolute;left:0px;top:777px;width:33px;height:1px;background:#c0c0c0;"></div>
<div style="position:absolute;left:0px;top:801px;width:33px;height:1px;background:#c0c0c0;"></div>
<div style="position:absolute;left:0px;top:825px;width:33px;height:1px;background:#c0c0c0;"></div>
<div style="position:absolute;left:0px;top:849px;width:33px;height:1px;background:#c0c0c0;"></div>
<div style="position:absolute;left:0px;top:873px;width:33px;height:1px;background:#c0c0c0;"></div>
<div style="position:absolute;left:0px;top:897px;width:33px;height:1px;background:#c0c0c0;"></div>
<div style="position:absolute;left:0px;top:921px;width:33px;height:1px;background:#c0c0c0;"></div>
<svg style="left:0;top:273px" width="33" height="23"><polygon points="30,4 30,20 14,20" fill="#b9b9b9"/></svg>
<div style="position:absolute;left:34px;top:297px;width:1860px;height:24px;background:#f0f0f0;"></div>
<div style="position:absolute;left:788px;top:297px;width:139px;height:48px;background:#f0f0f0;"></div>
<div style="position:absolute;left:928px;top:297px;width:139px;height:48px;background:#f0f0f0;"></div>
<div style="position:absolute;left:1068px;top:297px;width:139px;height:48px;background:#f0f0f0;"></div>
<div style="position:absolute;left:1208px;top:297px;width:165px;height:48px;background:#f0f0f0;"></div>
<div style="position:absolute;left:1374px;top:297px;width:158px;height:48px;background:#f0f0f0;"></div>
<div style="position:absolute;left:34px;top:345px;width:1860px;height:1px;background:#d4d4d4;"></div>
<div style="position:absolute;left:34px;top:369px;width:1860px;height:1px;background:#d4d4d4;"></div>
<div style="position:absolute;left:34px;top:393px;width:1860px;height:1px;background:#d4d4d4;"></div>
<div style="position:absolute;left:34px;top:417px;width:1860px;height:1px;background:#d4d4d4;"></div>
<div style="position:absolute;left:34px;top:441px;width:1860px;height:1px;background:#d4d4d4;"></div>
<div style="position:absolute;left:34px;top:465px;width:1860px;height:1px;background:#d4d4d4;"></div>
<div style="position:absolute;left:34px;top:489px;width:1860px;height:1px;background:#d4d4d4;"></div>
<div style="position:absolute;left:34px;top:513px;width:1860px;height:1px;background:#d4d4d4;"></div>
<div style="position:absolute;left:34px;top:537px;width:1860px;height:1px;background:#d4d4d4;"></div>
<div style="position:absolute;left:34px;top:561px;width:1860px;height:1px;background:#d4d4d4;"></div>
<div style="position:absolute;left:34px;top:585px;width:1860px;height:1px;background:#d4d4d4;"></div>
<div style="position:absolute;left:34px;top:609px;width:1860px;height:1px;background:#d4d4d4;"></div>
<div style="position:absolute;left:34px;top:633px;width:1860px;height:1px;background:#d4d4d4;"></div>
<div style="position:absolute;left:34px;top:657px;width:1860px;height:1px;background:#d4d4d4;"></div>
<div style="position:absolute;left:34px;top:681px;width:1860px;height:1px;background:#d4d4d4;"></div>
<div style="position:absolute;left:34px;top:705px;width:1860px;height:1px;background:#d4d4d4;"></div>
<div style="position:absolute;left:34px;top:729px;width:1860px;height:1px;background:#d4d4d4;"></div>
<div style="position:absolute;left:34px;top:753px;width:1860px;height:1px;background:#d4d4d4;"></div>
<div style="position:absolute;left:34px;top:777px;width:1860px;height:1px;background:#d4d4d4;"></div>
<div style="position:absolute;left:34px;top:801px;width:1860px;height:1px;background:#d4d4d4;"></div>
<div style="position:absolute;left:34px;top:825px;width:1860px;height:1px;background:#d4d4d4;"></div>
<div style="position:absolute;left:34px;top:849px;width:1860px;height:1px;background:#d4d4d4;"></div>
<div style="position:absolute;left:34px;top:873px;width:1860px;height:1px;background:#d4d4d4;"></div>
<div style="position:absolute;left:34px;top:897px;width:1860px;height:1px;background:#d4d4d4;"></div>
<div style="position:absolute;left:34px;top:921px;width:1860px;height:1px;background:#d4d4d4;"></div>
<div style="position:absolute;left:147px;top:346px;width:1px;height:588px;background:#d4d4d4;"></div>
<div style="position:absolute;left:287px;top:346px;width:1px;height:588px;background:#d4d4d4;"></div>
<div style="position:absolute;left:427px;top:346px;width:1px;height:588px;background:#d4d4d4;"></div>
<div style="position:absolute;left:567px;top:346px;width:1px;height:588px;background:#d4d4d4;"></div>
<div style="position:absolute;left:787px;top:346px;width:1px;height:588px;background:#d4d4d4;"></div>
<div style="position:absolute;left:927px;top:346px;width:1px;height:588px;background:#d4d4d4;"></div>
<div style="position:absolute;left:1067px;top:346px;width:1px;height:588px;background:#d4d4d4;"></div>
<div style="position:absolute;left:1207px;top:346px;width:1px;height:588px;background:#d4d4d4;"></div>
<div style="position:absolute;left:1373px;top:346px;width:1px;height:588px;background:#d4d4d4;"></div>
<div style="position:absolute;left:1532px;top:346px;width:1px;height:588px;background:#d4d4d4;"></div>
<div style="position:absolute;left:1671px;top:346px;width:1px;height:588px;background:#d4d4d4;"></div>
<div style="position:absolute;left:1810px;top:346px;width:1px;height:588px;background:#d4d4d4;"></div>
<div style="position:absolute;left:34px;top:321px;width:753px;height:1px;background:#000000;"></div>
<div style="position:absolute;left:1532px;top:321px;width:362px;height:1px;background:#000000;"></div>
<div style="position:absolute;left:34px;top:345px;width:1860px;height:1px;background:#000000;"></div>
<div style="position:absolute;left:147px;top:321px;width:1px;height:24px;background:#000000;"></div>
<div style="position:absolute;left:427px;top:321px;width:1px;height:24px;background:#000000;"></div>
<div style="position:absolute;left:567px;top:321px;width:1px;height:24px;background:#000000;"></div>
<div style="position:absolute;left:1671px;top:321px;width:1px;height:24px;background:#000000;"></div>
<div style="position:absolute;left:1810px;top:321px;width:1px;height:24px;background:#000000;"></div>
<div style="position:absolute;left:286px;top:297px;width:2px;height:49px;background:#000000;"></div>
<div style="position:absolute;left:786px;top:297px;width:2px;height:49px;background:#000000;"></div>
<div style="position:absolute;left:926px;top:297px;width:2px;height:49px;background:#000000;"></div>
<div style="position:absolute;left:1066px;top:297px;width:2px;height:49px;background:#000000;"></div>
<div style="position:absolute;left:1206px;top:297px;width:2px;height:49px;background:#000000;"></div>
<div style="position:absolute;left:1372px;top:297px;width:2px;height:49px;background:#000000;"></div>
<div style="position:absolute;left:1531px;top:297px;width:2px;height:49px;background:#000000;"></div>
<div class="t" style="left:100.00px;top:301.78px;font-size:16.8px;line-height:16.8px;color:#000;font-weight:bold;transform:scaleX(0.949);-webkit-text-stroke-width:0.12px;">Autoliquidación</div>
<div class="t" style="left:501.00px;top:301.78px;font-size:16.8px;line-height:16.8px;color:#000;font-weight:bold;transform:scaleX(0.946);-webkit-text-stroke-width:0.12px;">Actividad</div>
<div class="t" style="left:1636.00px;top:301.78px;font-size:16.8px;line-height:16.8px;color:#000;font-weight:bold;transform:scaleX(0.967);-webkit-text-stroke-width:0.12px;">Identificación de la Factura</div>
<div class="t" style="left:59.50px;top:326.78px;font-size:16.8px;line-height:16.8px;color:#000;font-weight:bold;transform:scaleX(0.889);-webkit-text-stroke-width:0.12px;">Ejercicio</div>
<div class="t" style="left:188.75px;top:326.78px;font-size:16.8px;line-height:16.8px;color:#000;font-weight:bold;transform:scaleX(0.927);-webkit-text-stroke-width:0.12px;">Periodo</div>
<div class="t" style="left:331.00px;top:326.78px;font-size:16.8px;line-height:16.8px;color:#000;font-weight:bold;transform:scaleX(0.911);-webkit-text-stroke-width:0.12px;">Código</div>
<div class="t" style="left:482.00px;top:326.78px;font-size:16.8px;line-height:16.8px;color:#000;font-weight:bold;transform:scaleX(0.904);-webkit-text-stroke-width:0.12px;">Tipo</div>
<div class="t" style="left:586.00px;top:326.78px;font-size:16.8px;line-height:16.8px;color:#000;font-weight:bold;transform:scaleX(0.928);-webkit-text-stroke-width:0.12px;">Grupo o epígrafe del IAE</div>
<div class="t" style="left:1584.50px;top:326.78px;font-size:16.8px;line-height:16.8px;color:#000;font-weight:bold;transform:scaleX(0.876);-webkit-text-stroke-width:0.12px;">Serie</div>
<div class="t" style="left:1710.75px;top:326.78px;font-size:16.8px;line-height:16.8px;color:#000;font-weight:bold;transform:scaleX(0.953);-webkit-text-stroke-width:0.12px;">Número</div>
<div class="t" style="left:1829.50px;top:326.78px;font-size:16.8px;line-height:16.8px;color:#000;font-weight:bold;transform:scaleX(0.953);-webkit-text-stroke-width:0.12px;">Número-</div>
<div class="t" style="left:797.50px;top:313.78px;font-size:16.8px;line-height:16.8px;color:#000;font-weight:bold;transform:scaleX(0.971);-webkit-text-stroke-width:0.12px;">Tipo de Factura</div>
<div class="t" style="left:947.00px;top:302.78px;font-size:16.8px;line-height:16.8px;color:#000;font-weight:bold;transform:scaleX(0.983);-webkit-text-stroke-width:0.12px;">Concepto de</div>
<div class="t" style="left:969.00px;top:325.78px;font-size:16.8px;line-height:16.8px;color:#000;font-weight:bold;transform:scaleX(0.923);-webkit-text-stroke-width:0.12px;">Ingreso</div>
<div class="t" style="left:1108.00px;top:302.78px;font-size:16.8px;line-height:16.8px;color:#000;font-weight:bold;transform:scaleX(0.973);-webkit-text-stroke-width:0.12px;">Ingreso</div>
<div class="t" style="left:1090.50px;top:325.78px;font-size:16.8px;line-height:16.8px;color:#000;font-weight:bold;transform:scaleX(0.955);-webkit-text-stroke-width:0.12px;">Computable</div>
<div class="t" style="left:1267.50px;top:302.78px;font-size:16.8px;line-height:16.8px;color:#000;font-weight:bold;transform:scaleX(0.949);-webkit-text-stroke-width:0.12px;">Fecha</div>
<div class="t" style="left:1247.50px;top:325.78px;font-size:16.8px;line-height:16.8px;color:#000;font-weight:bold;transform:scaleX(0.948);-webkit-text-stroke-width:0.12px;">Expedición</div>
<div class="t" style="left:1429.00px;top:302.78px;font-size:16.8px;line-height:16.8px;color:#000;font-weight:bold;transform:scaleX(0.944);-webkit-text-stroke-width:0.12px;">Fecha</div>
<div class="t" style="left:1412.00px;top:325.78px;font-size:16.8px;line-height:16.8px;color:#000;font-weight:bold;transform:scaleX(0.963);-webkit-text-stroke-width:0.12px;">Operación</div>
<div class="t" style="left:84.87px;top:279.18px;font-size:16.8px;line-height:16.8px;color:#1e7145;-webkit-text-stroke-width:0.05px;">A</div>
<div class="t" style="left:211.41px;top:279.18px;font-size:16.8px;line-height:16.8px;color:#222222;-webkit-text-stroke-width:0.05px;">B</div>
<div class="t" style="left:350.95px;top:279.18px;font-size:16.8px;line-height:16.8px;color:#222222;-webkit-text-stroke-width:0.05px;">C</div>
<div class="t" style="left:490.95px;top:279.18px;font-size:16.8px;line-height:16.8px;color:#222222;-webkit-text-stroke-width:0.05px;">D</div>
<div class="t" style="left:671.41px;top:279.18px;font-size:16.8px;line-height:16.8px;color:#222222;-webkit-text-stroke-width:0.05px;">E</div>
<div class="t" style="left:851.88px;top:279.18px;font-size:16.8px;line-height:16.8px;color:#222222;-webkit-text-stroke-width:0.05px;">F</div>
<div class="t" style="left:990.45px;top:279.18px;font-size:16.8px;line-height:16.8px;color:#222222;-webkit-text-stroke-width:0.05px;">G</div>
<div class="t" style="left:1130.95px;top:279.18px;font-size:16.8px;line-height:16.8px;color:#222222;-webkit-text-stroke-width:0.05px;">H</div>
<div class="t" style="left:1287.65px;top:279.18px;font-size:16.8px;line-height:16.8px;color:#222222;-webkit-text-stroke-width:0.05px;">I</div>
<div class="t" style="left:1448.30px;top:279.18px;font-size:16.8px;line-height:16.8px;color:#222222;-webkit-text-stroke-width:0.05px;">J</div>
<div class="t" style="left:1595.91px;top:279.18px;font-size:16.8px;line-height:16.8px;color:#222222;-webkit-text-stroke-width:0.05px;">K</div>
<div class="t" style="left:1735.84px;top:279.18px;font-size:16.8px;line-height:16.8px;color:#222222;-webkit-text-stroke-width:0.05px;">L</div>
<div class="t" style="left:1873.99px;top:279.18px;font-size:16.8px;line-height:16.8px;color:#222222;-webkit-text-stroke-width:0.05px;">M</div>
<div class="t" style="left:11.84px;top:304.28px;font-size:16.8px;line-height:16.8px;color:#222222;-webkit-text-stroke-width:0.05px;">1</div>
<div class="t" style="left:11.84px;top:327.28px;font-size:16.8px;line-height:16.8px;color:#222222;-webkit-text-stroke-width:0.05px;">2</div>
<div class="t" style="left:11.84px;top:351.28px;font-size:16.8px;line-height:16.8px;color:#1e7145;-webkit-text-stroke-width:0.05px;">3</div>
<div class="t" style="left:11.84px;top:375.28px;font-size:16.8px;line-height:16.8px;color:#222222;-webkit-text-stroke-width:0.05px;">4</div>
<div class="t" style="left:11.84px;top:399.28px;font-size:16.8px;line-height:16.8px;color:#222222;-webkit-text-stroke-width:0.05px;">5</div>
<div class="t" style="left:11.84px;top:423.28px;font-size:16.8px;line-height:16.8px;color:#222222;-webkit-text-stroke-width:0.05px;">6</div>
<div class="t" style="left:11.84px;top:447.28px;font-size:16.8px;line-height:16.8px;color:#222222;-webkit-text-stroke-width:0.05px;">7</div>
<div class="t" style="left:11.84px;top:471.28px;font-size:16.8px;line-height:16.8px;color:#222222;-webkit-text-stroke-width:0.05px;">8</div>
<div class="t" style="left:11.84px;top:495.28px;font-size:16.8px;line-height:16.8px;color:#222222;-webkit-text-stroke-width:0.05px;">9</div>
<div class="t" style="left:7.18px;top:519.28px;font-size:16.8px;line-height:16.8px;color:#222222;-webkit-text-stroke-width:0.05px;">10</div>
<div class="t" style="left:7.76px;top:543.28px;font-size:16.8px;line-height:16.8px;color:#222222;-webkit-text-stroke-width:0.05px;">11</div>
<div class="t" style="left:7.18px;top:567.28px;font-size:16.8px;line-height:16.8px;color:#222222;-webkit-text-stroke-width:0.05px;">12</div>
<div class="t" style="left:7.18px;top:591.28px;font-size:16.8px;line-height:16.8px;color:#222222;-webkit-text-stroke-width:0.05px;">13</div>
<div class="t" style="left:7.18px;top:615.28px;font-size:16.8px;line-height:16.8px;color:#222222;-webkit-text-stroke-width:0.05px;">14</div>
<div class="t" style="left:7.18px;top:639.28px;font-size:16.8px;line-height:16.8px;color:#222222;-webkit-text-stroke-width:0.05px;">15</div>
<div class="t" style="left:7.18px;top:663.28px;font-size:16.8px;line-height:16.8px;color:#222222;-webkit-text-stroke-width:0.05px;">16</div>
<div class="t" style="left:7.18px;top:687.28px;font-size:16.8px;line-height:16.8px;color:#222222;-webkit-text-stroke-width:0.05px;">17</div>
<div class="t" style="left:7.18px;top:711.28px;font-size:16.8px;line-height:16.8px;color:#222222;-webkit-text-stroke-width:0.05px;">18</div>
<div class="t" style="left:7.18px;top:735.28px;font-size:16.8px;line-height:16.8px;color:#222222;-webkit-text-stroke-width:0.05px;">19</div>
<div class="t" style="left:7.18px;top:759.28px;font-size:16.8px;line-height:16.8px;color:#222222;-webkit-text-stroke-width:0.05px;">20</div>
<div class="t" style="left:7.18px;top:783.28px;font-size:16.8px;line-height:16.8px;color:#222222;-webkit-text-stroke-width:0.05px;">21</div>
<div class="t" style="left:7.18px;top:807.28px;font-size:16.8px;line-height:16.8px;color:#222222;-webkit-text-stroke-width:0.05px;">22</div>
<div class="t" style="left:7.18px;top:831.28px;font-size:16.8px;line-height:16.8px;color:#222222;-webkit-text-stroke-width:0.05px;">23</div>
<div class="t" style="left:7.18px;top:855.28px;font-size:16.8px;line-height:16.8px;color:#222222;-webkit-text-stroke-width:0.05px;">24</div>
<div class="t" style="left:7.18px;top:879.28px;font-size:16.8px;line-height:16.8px;color:#222222;-webkit-text-stroke-width:0.05px;">25</div>
<div class="t" style="left:7.18px;top:903.28px;font-size:16.8px;line-height:16.8px;color:#222222;-webkit-text-stroke-width:0.05px;">26</div>
<div class="t" style="left:7.18px;top:927.28px;font-size:16.8px;line-height:16.8px;color:#222222;-webkit-text-stroke-width:0.05px;">27</div>
<div class="t" style="left:109.20px;top:350.03px;font-size:16.5px;line-height:16.5px;color:#000;transform:scaleX(0.956);-webkit-text-stroke-width:0.12px;">2022</div>
<div class="t" style="left:151.75px;top:350.03px;font-size:16.5px;line-height:16.5px;color:#000;transform:scaleX(0.884);-webkit-text-stroke-width:0.12px;">1T</div>
<div class="t" style="left:571.25px;top:350.03px;font-size:16.5px;line-height:16.5px;color:#000;transform:scaleX(0.953);-webkit-text-stroke-width:0.12px;">845</div>
<div class="t" style="left:791.25px;top:350.03px;font-size:16.5px;line-height:16.5px;color:#000;transform:scaleX(0.819);-webkit-text-stroke-width:0.12px;">F1</div>
<div class="t" style="left:932.00px;top:350.03px;font-size:16.5px;line-height:16.5px;color:#000;transform:scaleX(0.927);-webkit-text-stroke-width:0.12px;">I01</div>
<div class="t" style="left:1168.90px;top:350.03px;font-size:16.5px;line-height:16.5px;color:#000;transform:scaleX(0.942);-webkit-text-stroke-width:0.12px;">1000</div>
<div class="t" style="left:1211.25px;top:350.03px;font-size:16.5px;line-height:16.5px;color:#000;transform:scaleX(1.029);-webkit-text-stroke-width:0.12px;">08/03/2022</div>
<div class="t" style="left:1675.90px;top:350.03px;font-size:16.5px;line-height:16.5px;color:#000;transform:scaleX(1.041);-webkit-text-stroke-width:0.12px;">111</div>
<svg style="left:568px;top:346px" width="8" height="8"><polygon points="0,0 7,0 0,7" fill="#008000"/></svg>
<svg style="left:1672px;top:346px" width="8" height="8"><polygon points="0,0 7,0 0,7" fill="#008000"/></svg>
<div class="t" style="left:109.20px;top:374.03px;font-size:16.5px;line-height:16.5px;color:#000;transform:scaleX(0.956);-webkit-text-stroke-width:0.12px;">2022</div>
<div class="t" style="left:151.75px;top:374.03px;font-size:16.5px;line-height:16.5px;color:#000;transform:scaleX(0.884);-webkit-text-stroke-width:0.12px;">2T</div>
<div class="t" style="left:571.25px;top:374.03px;font-size:16.5px;line-height:16.5px;color:#000;transform:scaleX(0.953);-webkit-text-stroke-width:0.12px;">845</div>
<div class="t" style="left:791.25px;top:374.03px;font-size:16.5px;line-height:16.5px;color:#000;transform:scaleX(0.819);-webkit-text-stroke-width:0.12px;">F1</div>
<div class="t" style="left:932.00px;top:374.03px;font-size:16.5px;line-height:16.5px;color:#000;transform:scaleX(0.927);-webkit-text-stroke-width:0.12px;">I01</div>
<div class="t" style="left:1168.90px;top:374.03px;font-size:16.5px;line-height:16.5px;color:#000;transform:scaleX(0.942);-webkit-text-stroke-width:0.12px;">1000</div>
<div class="t" style="left:1211.25px;top:374.03px;font-size:16.5px;line-height:16.5px;color:#000;transform:scaleX(1.029);-webkit-text-stroke-width:0.12px;">04/04/2022</div>
<div class="t" style="left:1675.90px;top:374.03px;font-size:16.5px;line-height:16.5px;color:#000;transform:scaleX(1.019);-webkit-text-stroke-width:0.12px;">1112</div>
<svg style="left:568px;top:370px" width="8" height="8"><polygon points="0,0 7,0 0,7" fill="#008000"/></svg>
<svg style="left:1672px;top:370px" width="8" height="8"><polygon points="0,0 7,0 0,7" fill="#008000"/></svg>
<div class="t" style="left:109.20px;top:398.03px;font-size:16.5px;line-height:16.5px;color:#000;transform:scaleX(0.956);-webkit-text-stroke-width:0.12px;">2022</div>
<div class="t" style="left:151.75px;top:398.03px;font-size:16.5px;line-height:16.5px;color:#000;transform:scaleX(0.884);-webkit-text-stroke-width:0.12px;">2T</div>
<div class="t" style="left:571.25px;top:398.03px;font-size:16.5px;line-height:16.5px;color:#000;transform:scaleX(0.953);-webkit-text-stroke-width:0.12px;">845</div>
<div class="t" style="left:791.25px;top:398.03px;font-size:16.5px;line-height:16.5px;color:#000;transform:scaleX(0.819);-webkit-text-stroke-width:0.12px;">F1</div>
<div class="t" style="left:932.00px;top:398.03px;font-size:16.5px;line-height:16.5px;color:#000;transform:scaleX(0.927);-webkit-text-stroke-width:0.12px;">I01</div>
<div class="t" style="left:1168.90px;top:398.03px;font-size:16.5px;line-height:16.5px;color:#000;transform:scaleX(0.942);-webkit-text-stroke-width:0.12px;">1000</div>
<div class="t" style="left:1211.25px;top:398.03px;font-size:16.5px;line-height:16.5px;color:#000;transform:scaleX(1.029);-webkit-text-stroke-width:0.12px;">04/04/2022</div>
<div class="t" style="left:1675.90px;top:398.03px;font-size:16.5px;line-height:16.5px;color:#000;transform:scaleX(1.019);-webkit-text-stroke-width:0.12px;">1113</div>
<svg style="left:568px;top:394px" width="8" height="8"><polygon points="0,0 7,0 0,7" fill="#008000"/></svg>
<svg style="left:1672px;top:394px" width="8" height="8"><polygon points="0,0 7,0 0,7" fill="#008000"/></svg>
<div class="t" style="left:109.20px;top:422.03px;font-size:16.5px;line-height:16.5px;color:#000;transform:scaleX(0.956);-webkit-text-stroke-width:0.12px;">2022</div>
<div class="t" style="left:151.75px;top:422.03px;font-size:16.5px;line-height:16.5px;color:#000;transform:scaleX(0.884);-webkit-text-stroke-width:0.12px;">2T</div>
<div class="t" style="left:571.25px;top:422.03px;font-size:16.5px;line-height:16.5px;color:#000;transform:scaleX(0.953);-webkit-text-stroke-width:0.12px;">845</div>
<div class="t" style="left:791.25px;top:422.03px;font-size:16.5px;line-height:16.5px;color:#000;transform:scaleX(0.819);-webkit-text-stroke-width:0.12px;">F1</div>
<div class="t" style="left:932.00px;top:422.03px;font-size:16.5px;line-height:16.5px;color:#000;transform:scaleX(0.927);-webkit-text-stroke-width:0.12px;">I01</div>
<div class="t" style="left:1168.90px;top:422.03px;font-size:16.5px;line-height:16.5px;color:#000;transform:scaleX(0.942);-webkit-text-stroke-width:0.12px;">1000</div>
<div class="t" style="left:1211.25px;top:422.03px;font-size:16.5px;line-height:16.5px;color:#000;transform:scaleX(1.029);-webkit-text-stroke-width:0.12px;">04/04/2022</div>
<div class="t" style="left:1675.90px;top:422.03px;font-size:16.5px;line-height:16.5px;color:#000;transform:scaleX(1.019);-webkit-text-stroke-width:0.12px;">1114</div>
<svg style="left:568px;top:418px" width="8" height="8"><polygon points="0,0 7,0 0,7" fill="#008000"/></svg>
<svg style="left:1672px;top:418px" width="8" height="8"><polygon points="0,0 7,0 0,7" fill="#008000"/></svg>
<div class="t" style="left:109.20px;top:446.03px;font-size:16.5px;line-height:16.5px;color:#000;transform:scaleX(0.956);-webkit-text-stroke-width:0.12px;">2022</div>
<div class="t" style="left:151.75px;top:446.03px;font-size:16.5px;line-height:16.5px;color:#000;transform:scaleX(0.884);-webkit-text-stroke-width:0.12px;">2T</div>
<div class="t" style="left:571.25px;top:446.03px;font-size:16.5px;line-height:16.5px;color:#000;transform:scaleX(0.953);-webkit-text-stroke-width:0.12px;">845</div>
<div class="t" style="left:791.25px;top:446.03px;font-size:16.5px;line-height:16.5px;color:#000;transform:scaleX(0.819);-webkit-text-stroke-width:0.12px;">F1</div>
<div class="t" style="left:932.00px;top:446.03px;font-size:16.5px;line-height:16.5px;color:#000;transform:scaleX(0.927);-webkit-text-stroke-width:0.12px;">I01</div>
<div class="t" style="left:1168.90px;top:446.03px;font-size:16.5px;line-height:16.5px;color:#000;transform:scaleX(0.942);-webkit-text-stroke-width:0.12px;">1000</div>
<div class="t" style="left:1211.25px;top:446.03px;font-size:16.5px;line-height:16.5px;color:#000;transform:scaleX(1.029);-webkit-text-stroke-width:0.12px;">04/04/2022</div>
<div class="t" style="left:1675.90px;top:446.03px;font-size:16.5px;line-height:16.5px;color:#000;transform:scaleX(1.019);-webkit-text-stroke-width:0.12px;">1115</div>
<svg style="left:568px;top:442px" width="8" height="8"><polygon points="0,0 7,0 0,7" fill="#008000"/></svg>
<svg style="left:1672px;top:442px" width="8" height="8"><polygon points="0,0 7,0 0,7" fill="#008000"/></svg>
<div class="t" style="left:109.20px;top:470.03px;font-size:16.5px;line-height:16.5px;color:#000;transform:scaleX(0.956);-webkit-text-stroke-width:0.12px;">2022</div>
<div class="t" style="left:151.75px;top:470.03px;font-size:16.5px;line-height:16.5px;color:#000;transform:scaleX(0.884);-webkit-text-stroke-width:0.12px;">2T</div>
<div class="t" style="left:571.25px;top:470.03px;font-size:16.5px;line-height:16.5px;color:#000;transform:scaleX(0.953);-webkit-text-stroke-width:0.12px;">845</div>
<div class="t" style="left:791.25px;top:470.03px;font-size:16.5px;line-height:16.5px;color:#000;transform:scaleX(0.819);-webkit-text-stroke-width:0.12px;">F1</div>
<div class="t" style="left:932.00px;top:470.03px;font-size:16.5px;line-height:16.5px;color:#000;transform:scaleX(0.927);-webkit-text-stroke-width:0.12px;">I01</div>
<div class="t" style="left:1168.90px;top:470.03px;font-size:16.5px;line-height:16.5px;color:#000;transform:scaleX(0.942);-webkit-text-stroke-width:0.12px;">2000</div>
<div class="t" style="left:1211.25px;top:470.03px;font-size:16.5px;line-height:16.5px;color:#000;transform:scaleX(1.029);-webkit-text-stroke-width:0.12px;">04/04/2022</div>
<div class="t" style="left:1675.90px;top:470.03px;font-size:16.5px;line-height:16.5px;color:#000;transform:scaleX(1.019);-webkit-text-stroke-width:0.12px;">1115</div>
<svg style="left:568px;top:466px" width="8" height="8"><polygon points="0,0 7,0 0,7" fill="#008000"/></svg>
<svg style="left:1672px;top:466px" width="8" height="8"><polygon points="0,0 7,0 0,7" fill="#008000"/></svg>
<div class="t" style="left:109.20px;top:494.03px;font-size:16.5px;line-height:16.5px;color:#000;transform:scaleX(0.956);-webkit-text-stroke-width:0.12px;">2022</div>
<div class="t" style="left:151.75px;top:494.03px;font-size:16.5px;line-height:16.5px;color:#000;transform:scaleX(0.884);-webkit-text-stroke-width:0.12px;">2T</div>
<div class="t" style="left:571.25px;top:494.03px;font-size:16.5px;line-height:16.5px;color:#000;transform:scaleX(0.953);-webkit-text-stroke-width:0.12px;">845</div>
<div class="t" style="left:791.25px;top:494.03px;font-size:16.5px;line-height:16.5px;color:#000;transform:scaleX(0.819);-webkit-text-stroke-width:0.12px;">F1</div>
<div class="t" style="left:932.00px;top:494.03px;font-size:16.5px;line-height:16.5px;color:#000;transform:scaleX(0.927);-webkit-text-stroke-width:0.12px;">I01</div>
<div class="t" style="left:1168.90px;top:494.03px;font-size:16.5px;line-height:16.5px;color:#000;transform:scaleX(0.942);-webkit-text-stroke-width:0.12px;">1000</div>
<div class="t" style="left:1211.25px;top:494.03px;font-size:16.5px;line-height:16.5px;color:#000;transform:scaleX(1.029);-webkit-text-stroke-width:0.12px;">05/04/2022</div>
<div class="t" style="left:1675.90px;top:494.03px;font-size:16.5px;line-height:16.5px;color:#000;transform:scaleX(1.019);-webkit-text-stroke-width:0.12px;">1116</div>
<svg style="left:568px;top:490px" width="8" height="8"><polygon points="0,0 7,0 0,7" fill="#008000"/></svg>
<svg style="left:1672px;top:490px" width="8" height="8"><polygon points="0,0 7,0 0,7" fill="#008000"/></svg>
<div class="t" style="left:109.20px;top:518.03px;font-size:16.5px;line-height:16.5px;color:#000;transform:scaleX(0.956);-webkit-text-stroke-width:0.12px;">2022</div>
<div class="t" style="left:151.75px;top:518.03px;font-size:16.5px;line-height:16.5px;color:#000;transform:scaleX(0.884);-webkit-text-stroke-width:0.12px;">2T</div>
<div class="t" style="left:571.25px;top:518.03px;font-size:16.5px;line-height:16.5px;color:#000;transform:scaleX(0.953);-webkit-text-stroke-width:0.12px;">845</div>
<div class="t" style="left:791.25px;top:518.03px;font-size:16.5px;line-height:16.5px;color:#000;transform:scaleX(0.819);-webkit-text-stroke-width:0.12px;">F1</div>
<div class="t" style="left:932.00px;top:518.03px;font-size:16.5px;line-height:16.5px;color:#000;transform:scaleX(0.927);-webkit-text-stroke-width:0.12px;">I01</div>
<div class="t" style="left:1168.90px;top:518.03px;font-size:16.5px;line-height:16.5px;color:#000;transform:scaleX(0.942);-webkit-text-stroke-width:0.12px;">2000</div>
<div class="t" style="left:1211.25px;top:518.03px;font-size:16.5px;line-height:16.5px;color:#000;transform:scaleX(1.029);-webkit-text-stroke-width:0.12px;">05/04/2022</div>
<div class="t" style="left:1675.90px;top:518.03px;font-size:16.5px;line-height:16.5px;color:#000;transform:scaleX(1.019);-webkit-text-stroke-width:0.12px;">1116</div>
<svg style="left:568px;top:514px" width="8" height="8"><polygon points="0,0 7,0 0,7" fill="#008000"/></svg>
<svg style="left:1672px;top:514px" width="8" height="8"><polygon points="0,0 7,0 0,7" fill="#008000"/></svg>
<div class="t" style="left:109.20px;top:542.03px;font-size:16.5px;line-height:16.5px;color:#000;transform:scaleX(0.956);-webkit-text-stroke-width:0.12px;">2022</div>
<div class="t" style="left:151.75px;top:542.03px;font-size:16.5px;line-height:16.5px;color:#000;transform:scaleX(0.884);-webkit-text-stroke-width:0.12px;">2T</div>
<div class="t" style="left:571.25px;top:542.03px;font-size:16.5px;line-height:16.5px;color:#000;transform:scaleX(0.953);-webkit-text-stroke-width:0.12px;">845</div>
<div class="t" style="left:791.25px;top:542.03px;font-size:16.5px;line-height:16.5px;color:#000;transform:scaleX(0.819);-webkit-text-stroke-width:0.12px;">F1</div>
<div class="t" style="left:932.00px;top:542.03px;font-size:16.5px;line-height:16.5px;color:#000;transform:scaleX(0.927);-webkit-text-stroke-width:0.12px;">I01</div>
<div class="t" style="left:1168.90px;top:542.03px;font-size:16.5px;line-height:16.5px;color:#000;transform:scaleX(0.942);-webkit-text-stroke-width:0.12px;">1000</div>
<div class="t" style="left:1211.25px;top:542.03px;font-size:16.5px;line-height:16.5px;color:#000;transform:scaleX(1.029);-webkit-text-stroke-width:0.12px;">05/04/2022</div>
<div class="t" style="left:1675.90px;top:542.03px;font-size:16.5px;line-height:16.5px;color:#000;transform:scaleX(1.019);-webkit-text-stroke-width:0.12px;">1117</div>
<svg style="left:568px;top:538px" width="8" height="8"><polygon points="0,0 7,0 0,7" fill="#008000"/></svg>
<svg style="left:1672px;top:538px" width="8" height="8"><polygon points="0,0 7,0 0,7" fill="#008000"/></svg>
<div class="t" style="left:109.20px;top:566.03px;font-size:16.5px;line-height:16.5px;color:#000;transform:scaleX(0.956);-webkit-text-stroke-width:0.12px;">2022</div>
<div class="t" style="left:151.75px;top:566.03px;font-size:16.5px;line-height:16.5px;color:#000;transform:scaleX(0.884);-webkit-text-stroke-width:0.12px;">2T</div>
<div class="t" style="left:571.25px;top:566.03px;font-size:16.5px;line-height:16.5px;color:#000;transform:scaleX(0.953);-webkit-text-stroke-width:0.12px;">845</div>
<div class="t" style="left:791.25px;top:566.03px;font-size:16.5px;line-height:16.5px;color:#000;transform:scaleX(0.819);-webkit-text-stroke-width:0.12px;">F1</div>
<div class="t" style="left:932.00px;top:566.03px;font-size:16.5px;line-height:16.5px;color:#000;transform:scaleX(0.927);-webkit-text-stroke-width:0.12px;">I01</div>
<div class="t" style="left:1168.90px;top:566.03px;font-size:16.5px;line-height:16.5px;color:#000;transform:scaleX(0.942);-webkit-text-stroke-width:0.12px;">2000</div>
<div class="t" style="left:1211.25px;top:566.03px;font-size:16.5px;line-height:16.5px;color:#000;transform:scaleX(1.029);-webkit-text-stroke-width:0.12px;">05/04/2022</div>
<div class="t" style="left:1675.90px;top:566.03px;font-size:16.5px;line-height:16.5px;color:#000;transform:scaleX(1.019);-webkit-text-stroke-width:0.12px;">1117</div>
<svg style="left:568px;top:562px" width="8" height="8"><polygon points="0,0 7,0 0,7" fill="#008000"/></svg>
<svg style="left:1672px;top:562px" width="8" height="8"><polygon points="0,0 7,0 0,7" fill="#008000"/></svg>
<div class="t" style="left:109.20px;top:590.03px;font-size:16.5px;line-height:16.5px;color:#000;transform:scaleX(0.956);-webkit-text-stroke-width:0.12px;">2022</div>
<div class="t" style="left:151.75px;top:590.03px;font-size:16.5px;line-height:16.5px;color:#000;transform:scaleX(0.884);-webkit-text-stroke-width:0.12px;">2T</div>
<div class="t" style="left:571.25px;top:590.03px;font-size:16.5px;line-height:16.5px;color:#000;transform:scaleX(0.953);-webkit-text-stroke-width:0.12px;">845</div>
<div class="t" style="left:791.25px;top:590.03px;font-size:16.5px;line-height:16.5px;color:#000;transform:scaleX(0.819);-webkit-text-stroke-width:0.12px;">F1</div>
<div class="t" style="left:932.00px;top:590.03px;font-size:16.5px;line-height:16.5px;color:#000;transform:scaleX(0.927);-webkit-text-stroke-width:0.12px;">I01</div>
<div class="t" style="left:1168.90px;top:590.03px;font-size:16.5px;line-height:16.5px;color:#000;transform:scaleX(0.942);-webkit-text-stroke-width:0.12px;">1000</div>
<div class="t" style="left:1211.25px;top:590.03px;font-size:16.5px;line-height:16.5px;color:#000;transform:scaleX(1.029);-webkit-text-stroke-width:0.12px;">05/04/2022</div>
<div class="t" style="left:1675.90px;top:590.03px;font-size:16.5px;line-height:16.5px;color:#000;transform:scaleX(0.984);-webkit-text-stroke-width:0.12px;">1120</div>
<svg style="left:568px;top:586px" width="8" height="8"><polygon points="0,0 7,0 0,7" fill="#008000"/></svg>
<svg style="left:1672px;top:586px" width="8" height="8"><polygon points="0,0 7,0 0,7" fill="#008000"/></svg>
<div class="t" style="left:109.20px;top:614.03px;font-size:16.5px;line-height:16.5px;color:#000;transform:scaleX(0.956);-webkit-text-stroke-width:0.12px;">2022</div>
<div class="t" style="left:151.75px;top:614.03px;font-size:16.5px;line-height:16.5px;color:#000;transform:scaleX(0.884);-webkit-text-stroke-width:0.12px;">2T</div>
<div class="t" style="left:571.25px;top:614.03px;font-size:16.5px;line-height:16.5px;color:#000;transform:scaleX(0.953);-webkit-text-stroke-width:0.12px;">845</div>
<div class="t" style="left:791.25px;top:614.03px;font-size:16.5px;line-height:16.5px;color:#000;transform:scaleX(0.819);-webkit-text-stroke-width:0.12px;">F1</div>
<div class="t" style="left:932.00px;top:614.03px;font-size:16.5px;line-height:16.5px;color:#000;transform:scaleX(0.927);-webkit-text-stroke-width:0.12px;">I01</div>
<div class="t" style="left:1168.90px;top:614.03px;font-size:16.5px;line-height:16.5px;color:#000;transform:scaleX(0.942);-webkit-text-stroke-width:0.12px;">1000</div>
<div class="t" style="left:1211.25px;top:614.03px;font-size:16.5px;line-height:16.5px;color:#000;transform:scaleX(1.029);-webkit-text-stroke-width:0.12px;">05/04/2022</div>
<div class="t" style="left:1675.90px;top:614.03px;font-size:16.5px;line-height:16.5px;color:#000;transform:scaleX(0.984);-webkit-text-stroke-width:0.12px;">1121</div>
<svg style="left:568px;top:610px" width="8" height="8"><polygon points="0,0 7,0 0,7" fill="#008000"/></svg>
<svg style="left:1672px;top:610px" width="8" height="8"><polygon points="0,0 7,0 0,7" fill="#008000"/></svg>
<div class="t" style="left:109.20px;top:638.03px;font-size:16.5px;line-height:16.5px;color:#000;transform:scaleX(0.956);-webkit-text-stroke-width:0.12px;">2022</div>
<div class="t" style="left:151.75px;top:638.03px;font-size:16.5px;line-height:16.5px;color:#000;transform:scaleX(0.884);-webkit-text-stroke-width:0.12px;">2T</div>
<div class="t" style="left:571.25px;top:638.03px;font-size:16.5px;line-height:16.5px;color:#000;transform:scaleX(0.953);-webkit-text-stroke-width:0.12px;">845</div>
<div class="t" style="left:791.25px;top:638.03px;font-size:16.5px;line-height:16.5px;color:#000;transform:scaleX(0.819);-webkit-text-stroke-width:0.12px;">F1</div>
<div class="t" style="left:932.00px;top:638.03px;font-size:16.5px;line-height:16.5px;color:#000;transform:scaleX(0.927);-webkit-text-stroke-width:0.12px;">I01</div>
<div class="t" style="left:1168.90px;top:638.03px;font-size:16.5px;line-height:16.5px;color:#000;transform:scaleX(0.942);-webkit-text-stroke-width:0.12px;">1000</div>
<div class="t" style="left:1211.25px;top:638.03px;font-size:16.5px;line-height:16.5px;color:#000;transform:scaleX(1.029);-webkit-text-stroke-width:0.12px;">05/04/2022</div>
<div class="t" style="left:1675.90px;top:638.03px;font-size:16.5px;line-height:16.5px;color:#000;transform:scaleX(0.984);-webkit-text-stroke-width:0.12px;">1123</div>
<svg style="left:568px;top:634px" width="8" height="8"><polygon points="0,0 7,0 0,7" fill="#008000"/></svg>
<svg style="left:1672px;top:634px" width="8" height="8"><polygon points="0,0 7,0 0,7" fill="#008000"/></svg>
<div class="t" style="left:109.20px;top:662.03px;font-size:16.5px;line-height:16.5px;color:#000;transform:scaleX(0.956);-webkit-text-stroke-width:0.12px;">2022</div>
<div class="t" style="left:151.75px;top:662.03px;font-size:16.5px;line-height:16.5px;color:#000;transform:scaleX(0.884);-webkit-text-stroke-width:0.12px;">2T</div>
<div class="t" style="left:571.25px;top:662.03px;font-size:16.5px;line-height:16.5px;color:#000;transform:scaleX(0.953);-webkit-text-stroke-width:0.12px;">845</div>
<div class="t" style="left:791.25px;top:662.03px;font-size:16.5px;line-height:16.5px;color:#000;transform:scaleX(0.819);-webkit-text-stroke-width:0.12px;">F1</div>
<div class="t" style="left:932.00px;top:662.03px;font-size:16.5px;line-height:16.5px;color:#000;transform:scaleX(0.927);-webkit-text-stroke-width:0.12px;">I01</div>
<div class="t" style="left:1168.90px;top:662.03px;font-size:16.5px;line-height:16.5px;color:#000;transform:scaleX(0.942);-webkit-text-stroke-width:0.12px;">1000</div>
<div class="t" style="left:1211.25px;top:662.03px;font-size:16.5px;line-height:16.5px;color:#000;transform:scaleX(1.029);-webkit-text-stroke-width:0.12px;">07/04/2022</div>
<div class="t" style="left:1675.90px;top:662.03px;font-size:16.5px;line-height:16.5px;color:#000;transform:scaleX(0.984);-webkit-text-stroke-width:0.12px;">1125</div>
<svg style="left:568px;top:658px" width="8" height="8"><polygon points="0,0 7,0 0,7" fill="#008000"/></svg>
<svg style="left:1672px;top:658px" width="8" height="8"><polygon points="0,0 7,0 0,7" fill="#008000"/></svg>
<div class="t" style="left:109.20px;top:686.03px;font-size:16.5px;line-height:16.5px;color:#000;transform:scaleX(0.956);-webkit-text-stroke-width:0.12px;">2022</div>
<div class="t" style="left:151.75px;top:686.03px;font-size:16.5px;line-height:16.5px;color:#000;transform:scaleX(0.884);-webkit-text-stroke-width:0.12px;">2T</div>
<div class="t" style="left:571.25px;top:686.03px;font-size:16.5px;line-height:16.5px;color:#000;transform:scaleX(0.953);-webkit-text-stroke-width:0.12px;">845</div>
<div class="t" style="left:791.25px;top:686.03px;font-size:16.5px;line-height:16.5px;color:#000;transform:scaleX(0.819);-webkit-text-stroke-width:0.12px;">F1</div>
<div class="t" style="left:932.00px;top:686.03px;font-size:16.5px;line-height:16.5px;color:#000;transform:scaleX(0.927);-webkit-text-stroke-width:0.12px;">I01</div>
<div class="t" style="left:1168.90px;top:686.03px;font-size:16.5px;line-height:16.5px;color:#000;transform:scaleX(0.942);-webkit-text-stroke-width:0.12px;">2000</div>
<div class="t" style="left:1211.25px;top:686.03px;font-size:16.5px;line-height:16.5px;color:#000;transform:scaleX(1.029);-webkit-text-stroke-width:0.12px;">07/04/2022</div>
<div class="t" style="left:1675.90px;top:686.03px;font-size:16.5px;line-height:16.5px;color:#000;transform:scaleX(0.984);-webkit-text-stroke-width:0.12px;">1125</div>
<svg style="left:568px;top:682px" width="8" height="8"><polygon points="0,0 7,0 0,7" fill="#008000"/></svg>
<svg style="left:1672px;top:682px" width="8" height="8"><polygon points="0,0 7,0 0,7" fill="#008000"/></svg>
<div class="t" style="left:109.20px;top:710.03px;font-size:16.5px;line-height:16.5px;color:#000;transform:scaleX(0.956);-webkit-text-stroke-width:0.12px;">2022</div>
<div class="t" style="left:151.75px;top:710.03px;font-size:16.5px;line-height:16.5px;color:#000;transform:scaleX(0.884);-webkit-text-stroke-width:0.12px;">2T</div>
<div class="t" style="left:571.25px;top:710.03px;font-size:16.5px;line-height:16.5px;color:#000;transform:scaleX(0.953);-webkit-text-stroke-width:0.12px;">845</div>
<div class="t" style="left:791.25px;top:710.03px;font-size:16.5px;line-height:16.5px;color:#000;transform:scaleX(0.819);-webkit-text-stroke-width:0.12px;">F1</div>
<div class="t" style="left:932.00px;top:710.03px;font-size:16.5px;line-height:16.5px;color:#000;transform:scaleX(0.927);-webkit-text-stroke-width:0.12px;">I01</div>
<div class="t" style="left:1168.90px;top:710.03px;font-size:16.5px;line-height:16.5px;color:#000;transform:scaleX(0.942);-webkit-text-stroke-width:0.12px;">1000</div>
<div class="t" style="left:1211.25px;top:710.03px;font-size:16.5px;line-height:16.5px;color:#000;transform:scaleX(1.029);-webkit-text-stroke-width:0.12px;">07/04/2022</div>
<div class="t" style="left:1675.90px;top:710.03px;font-size:16.5px;line-height:16.5px;color:#000;transform:scaleX(0.979);-webkit-text-stroke-width:0.12px;">11251</div>
<svg style="left:568px;top:706px" width="8" height="8"><polygon points="0,0 7,0 0,7" fill="#008000"/></svg>
<svg style="left:1672px;top:706px" width="8" height="8"><polygon points="0,0 7,0 0,7" fill="#008000"/></svg>
<div class="t" style="left:109.20px;top:734.03px;font-size:16.5px;line-height:16.5px;color:#000;transform:scaleX(0.956);-webkit-text-stroke-width:0.12px;">2022</div>
<div class="t" style="left:151.75px;top:734.03px;font-size:16.5px;line-height:16.5px;color:#000;transform:scaleX(0.884);-webkit-text-stroke-width:0.12px;">2T</div>
<div class="t" style="left:571.25px;top:734.03px;font-size:16.5px;line-height:16.5px;color:#000;transform:scaleX(0.953);-webkit-text-stroke-width:0.12px;">845</div>
<div class="t" style="left:791.25px;top:734.03px;font-size:16.5px;line-height:16.5px;color:#000;transform:scaleX(0.819);-webkit-text-stroke-width:0.12px;">F1</div>
<div class="t" style="left:932.00px;top:734.03px;font-size:16.5px;line-height:16.5px;color:#000;transform:scaleX(0.927);-webkit-text-stroke-width:0.12px;">I01</div>
<div class="t" style="left:1168.90px;top:734.03px;font-size:16.5px;line-height:16.5px;color:#000;transform:scaleX(0.942);-webkit-text-stroke-width:0.12px;">2000</div>
<div class="t" style="left:1211.25px;top:734.03px;font-size:16.5px;line-height:16.5px;color:#000;transform:scaleX(1.029);-webkit-text-stroke-width:0.12px;">07/04/2022</div>
<div class="t" style="left:1675.90px;top:734.03px;font-size:16.5px;line-height:16.5px;color:#000;transform:scaleX(0.979);-webkit-text-stroke-width:0.12px;">11251</div>
<svg style="left:568px;top:730px" width="8" height="8"><polygon points="0,0 7,0 0,7" fill="#008000"/></svg>
<svg style="left:1672px;top:730px" width="8" height="8"><polygon points="0,0 7,0 0,7" fill="#008000"/></svg>
<div class="t" style="left:109.20px;top:758.03px;font-size:16.5px;line-height:16.5px;color:#000;transform:scaleX(0.956);-webkit-text-stroke-width:0.12px;">2022</div>
<div class="t" style="left:151.75px;top:758.03px;font-size:16.5px;line-height:16.5px;color:#000;transform:scaleX(0.884);-webkit-text-stroke-width:0.12px;">2T</div>
<div class="t" style="left:571.25px;top:758.03px;font-size:16.5px;line-height:16.5px;color:#000;transform:scaleX(0.953);-webkit-text-stroke-width:0.12px;">845</div>
<div class="t" style="left:791.25px;top:758.03px;font-size:16.5px;line-height:16.5px;color:#000;transform:scaleX(0.819);-webkit-text-stroke-width:0.12px;">F1</div>
<div class="t" style="left:932.00px;top:758.03px;font-size:16.5px;line-height:16.5px;color:#000;transform:scaleX(0.927);-webkit-text-stroke-width:0.12px;">I01</div>
<div class="t" style="left:1168.90px;top:758.03px;font-size:16.5px;line-height:16.5px;color:#000;transform:scaleX(0.942);-webkit-text-stroke-width:0.12px;">1000</div>
<div class="t" style="left:1211.25px;top:758.03px;font-size:16.5px;line-height:16.5px;color:#000;transform:scaleX(1.029);-webkit-text-stroke-width:0.12px;">07/04/2022</div>
<div class="t" style="left:1675.90px;top:758.03px;font-size:16.5px;line-height:16.5px;color:#000;transform:scaleX(0.979);-webkit-text-stroke-width:0.12px;">11252</div>
<svg style="left:568px;top:754px" width="8" height="8"><polygon points="0,0 7,0 0,7" fill="#008000"/></svg>
<svg style="left:1672px;top:754px" width="8" height="8"><polygon points="0,0 7,0 0,7" fill="#008000"/></svg>
<div class="t" style="left:109.20px;top:782.03px;font-size:16.5px;line-height:16.5px;color:#000;transform:scaleX(0.956);-webkit-text-stroke-width:0.12px;">2022</div>
<div class="t" style="left:151.75px;top:782.03px;font-size:16.5px;line-height:16.5px;color:#000;transform:scaleX(0.884);-webkit-text-stroke-width:0.12px;">2T</div>
<div class="t" style="left:571.25px;top:782.03px;font-size:16.5px;line-height:16.5px;color:#000;transform:scaleX(0.953);-webkit-text-stroke-width:0.12px;">845</div>
<div class="t" style="left:791.25px;top:782.03px;font-size:16.5px;line-height:16.5px;color:#000;transform:scaleX(0.819);-webkit-text-stroke-width:0.12px;">F1</div>
<div class="t" style="left:932.00px;top:782.03px;font-size:16.5px;line-height:16.5px;color:#000;transform:scaleX(0.927);-webkit-text-stroke-width:0.12px;">I01</div>
<div class="t" style="left:1168.90px;top:782.03px;font-size:16.5px;line-height:16.5px;color:#000;transform:scaleX(0.942);-webkit-text-stroke-width:0.12px;">2000</div>
<div class="t" style="left:1211.25px;top:782.03px;font-size:16.5px;line-height:16.5px;color:#000;transform:scaleX(1.029);-webkit-text-stroke-width:0.12px;">07/04/2022</div>
<div class="t" style="left:1675.90px;top:782.03px;font-size:16.5px;line-height:16.5px;color:#000;transform:scaleX(0.979);-webkit-text-stroke-width:0.12px;">11252</div>
<svg style="left:568px;top:778px" width="8" height="8"><polygon points="0,0 7,0 0,7" fill="#008000"/></svg>
<svg style="left:1672px;top:778px" width="8" height="8"><polygon points="0,0 7,0 0,7" fill="#008000"/></svg>
<div class="t" style="left:109.20px;top:806.03px;font-size:16.5px;line-height:16.5px;color:#000;transform:scaleX(0.956);-webkit-text-stroke-width:0.12px;">2022</div>
<div class="t" style="left:151.75px;top:806.03px;font-size:16.5px;line-height:16.5px;color:#000;transform:scaleX(0.884);-webkit-text-stroke-width:0.12px;">2T</div>
<div class="t" style="left:571.25px;top:806.03px;font-size:16.5px;line-height:16.5px;color:#000;transform:scaleX(0.953);-webkit-text-stroke-width:0.12px;">845</div>
<div class="t" style="left:791.25px;top:806.03px;font-size:16.5px;line-height:16.5px;color:#000;transform:scaleX(0.819);-webkit-text-stroke-width:0.12px;">F1</div>
<div class="t" style="left:932.00px;top:806.03px;font-size:16.5px;line-height:16.5px;color:#000;transform:scaleX(0.927);-webkit-text-stroke-width:0.12px;">I01</div>
<div class="t" style="left:1168.90px;top:806.03px;font-size:16.5px;line-height:16.5px;color:#000;transform:scaleX(0.942);-webkit-text-stroke-width:0.12px;">1000</div>
<div class="t" style="left:1211.25px;top:806.03px;font-size:16.5px;line-height:16.5px;color:#000;transform:scaleX(1.029);-webkit-text-stroke-width:0.12px;">05/04/2022</div>
<div class="t" style="left:1675.90px;top:806.03px;font-size:16.5px;line-height:16.5px;color:#000;transform:scaleX(0.984);-webkit-text-stroke-width:0.12px;">1126</div>
<svg style="left:568px;top:802px" width="8" height="8"><polygon points="0,0 7,0 0,7" fill="#008000"/></svg>
<svg style="left:1672px;top:802px" width="8" height="8"><polygon points="0,0 7,0 0,7" fill="#008000"/></svg>
<div class="t" style="left:109.20px;top:830.03px;font-size:16.5px;line-height:16.5px;color:#000;transform:scaleX(0.956);-webkit-text-stroke-width:0.12px;">2022</div>
<div class="t" style="left:151.75px;top:830.03px;font-size:16.5px;line-height:16.5px;color:#000;transform:scaleX(0.884);-webkit-text-stroke-width:0.12px;">2T</div>
<div class="t" style="left:571.25px;top:830.03px;font-size:16.5px;line-height:16.5px;color:#000;transform:scaleX(0.953);-webkit-text-stroke-width:0.12px;">845</div>
<div class="t" style="left:791.25px;top:830.03px;font-size:16.5px;line-height:16.5px;color:#000;transform:scaleX(0.819);-webkit-text-stroke-width:0.12px;">F1</div>
<div class="t" style="left:932.00px;top:830.03px;font-size:16.5px;line-height:16.5px;color:#000;transform:scaleX(0.927);-webkit-text-stroke-width:0.12px;">I01</div>
<div class="t" style="left:1177.70px;top:830.03px;font-size:16.5px;line-height:16.5px;color:#000;transform:scaleX(0.936);-webkit-text-stroke-width:0.12px;">100</div>
<div class="t" style="left:1211.25px;top:830.03px;font-size:16.5px;line-height:16.5px;color:#000;transform:scaleX(1.029);-webkit-text-stroke-width:0.12px;">05/04/2022</div>
<div class="t" style="left:1675.90px;top:830.03px;font-size:16.5px;line-height:16.5px;color:#000;transform:scaleX(0.984);-webkit-text-stroke-width:0.12px;">1126</div>
<svg style="left:568px;top:826px" width="8" height="8"><polygon points="0,0 7,0 0,7" fill="#008000"/></svg>
<svg style="left:1672px;top:826px" width="8" height="8"><polygon points="0,0 7,0 0,7" fill="#008000"/></svg>
<div class="t" style="left:109.20px;top:854.03px;font-size:16.5px;line-height:16.5px;color:#000;transform:scaleX(0.956);-webkit-text-stroke-width:0.12px;">2022</div>
<div class="t" style="left:151.75px;top:854.03px;font-size:16.5px;line-height:16.5px;color:#000;transform:scaleX(0.884);-webkit-text-stroke-width:0.12px;">2T</div>
<div class="t" style="left:571.25px;top:854.03px;font-size:16.5px;line-height:16.5px;color:#000;transform:scaleX(0.953);-webkit-text-stroke-width:0.12px;">845</div>
<div class="t" style="left:791.25px;top:854.03px;font-size:16.5px;line-height:16.5px;color:#000;transform:scaleX(0.819);-webkit-text-stroke-width:0.12px;">F1</div>
<div class="t" style="left:932.00px;top:854.03px;font-size:16.5px;line-height:16.5px;color:#000;transform:scaleX(0.927);-webkit-text-stroke-width:0.12px;">I01</div>
<div class="t" style="left:1168.90px;top:854.03px;font-size:16.5px;line-height:16.5px;color:#000;transform:scaleX(0.942);-webkit-text-stroke-width:0.12px;">1000</div>
<div class="t" style="left:1211.25px;top:854.03px;font-size:16.5px;line-height:16.5px;color:#000;transform:scaleX(1.029);-webkit-text-stroke-width:0.12px;">05/04/2022</div>
<div class="t" style="left:1675.90px;top:854.03px;font-size:16.5px;line-height:16.5px;color:#000;transform:scaleX(0.984);-webkit-text-stroke-width:0.12px;">1129</div>
<svg style="left:568px;top:850px" width="8" height="8"><polygon points="0,0 7,0 0,7" fill="#008000"/></svg>
<svg style="left:1672px;top:850px" width="8" height="8"><polygon points="0,0 7,0 0,7" fill="#008000"/></svg>
<div class="t" style="left:109.20px;top:878.03px;font-size:16.5px;line-height:16.5px;color:#000;transform:scaleX(0.956);-webkit-text-stroke-width:0.12px;">2022</div>
<div class="t" style="left:151.75px;top:878.03px;font-size:16.5px;line-height:16.5px;color:#000;transform:scaleX(0.884);-webkit-text-stroke-width:0.12px;">2T</div>
<div class="t" style="left:571.25px;top:878.03px;font-size:16.5px;line-height:16.5px;color:#000;transform:scaleX(0.953);-webkit-text-stroke-width:0.12px;">845</div>
<div class="t" style="left:791.25px;top:878.03px;font-size:16.5px;line-height:16.5px;color:#000;transform:scaleX(0.819);-webkit-text-stroke-width:0.12px;">F1</div>
<div class="t" style="left:932.00px;top:878.03px;font-size:16.5px;line-height:16.5px;color:#000;transform:scaleX(0.927);-webkit-text-stroke-width:0.12px;">I01</div>
<div class="t" style="left:1168.90px;top:878.03px;font-size:16.5px;line-height:16.5px;color:#000;transform:scaleX(0.942);-webkit-text-stroke-width:0.12px;">1000</div>
<div class="t" style="left:1211.25px;top:878.03px;font-size:16.5px;line-height:16.5px;color:#000;transform:scaleX(1.029);-webkit-text-stroke-width:0.12px;">05/04/2022</div>
<div class="t" style="left:1675.90px;top:878.03px;font-size:16.5px;line-height:16.5px;color:#000;transform:scaleX(0.984);-webkit-text-stroke-width:0.12px;">1130</div>
<svg style="left:568px;top:874px" width="8" height="8"><polygon points="0,0 7,0 0,7" fill="#008000"/></svg>
<svg style="left:1672px;top:874px" width="8" height="8"><polygon points="0,0 7,0 0,7" fill="#008000"/></svg>
<div style="position:absolute;left:32px;top:344px;width:117px;height:2px;background:#1e7145;"></div>
<div style="position:absolute;left:32px;top:369px;width:112px;height:2px;background:#1e7145;"></div>
<div style="position:absolute;left:32px;top:344px;width:2px;height:27px;background:#1e7145;"></div>
<div style="position:absolute;left:147px;top:344px;width:2px;height:22px;background:#1e7145;"></div>
<div style="position:absolute;left:144px;top:366px;width:7px;height:7px;background:#ffffff;"></div>
<div style="position:absolute;left:145px;top:367px;width:5px;height:5px;background:#1e7145;"></div>
<div style="position:absolute;left:1895px;top:273px;width:25px;height:662px;background:#e6e6e6;"></div>
<div style="position:absolute;left:1898px;top:275px;width:19px;height:660px;background:#dcdcdc;"></div>
<div style="position:absolute;left:1898px;top:275px;width:19px;height:20px;background:#ffffff;box-sizing:border-box;border:1px solid #707070;border-bottom-width:2px"></div>
<svg style="left:1898px;top:275px" width="19" height="19"><polygon points="5,10.7 14,10.7 9.5,6" fill="#606060"/></svg>
<div style="position:absolute;left:1898px;top:294px;width:19px;height:598px;background:#ffffff;box-sizing:border-box;border:1px solid #707070"></div>
<div style="position:absolute;left:1898px;top:916px;width:19px;height:19px;background:#ffffff;box-sizing:border-box;border:1px solid #707070"></div>
<svg style="left:1898px;top:916px" width="19" height="19"><polygon points="5,8 14,8 9.5,13" fill="#606060"/></svg>
<div style="position:absolute;left:0px;top:934px;width:1920px;height:29px;background:#e6e6e6;"></div>
<div style="position:absolute;left:0px;top:934px;width:103px;height:1px;background:#ababab;"></div>
<div style="position:absolute;left:310px;top:934px;width:1584px;height:1px;background:#ababab;"></div>
<div style="position:absolute;left:1894px;top:273px;width:1px;height:662px;background:#ababab;"></div>
<div style="position:absolute;left:103px;top:934px;width:1px;height:25px;background:#ababab;"></div>
<div style="position:absolute;left:309px;top:934px;width:1px;height:25px;background:#ababab;"></div>
<div style="position:absolute;left:104px;top:934px;width:205px;height:24px;background:#ffffff;"></div>
<div style="position:absolute;left:104px;top:958px;width:206px;height:2px;background:#1e7145;"></div>
<div class="t" style="left:115.50px;top:936.53px;font-size:16.5px;line-height:16.5px;color:#107c41;font-weight:bold;transform:scaleX(0.942);-webkit-text-stroke-width:0.15px;">EXPEDIDAS_INGRESOS</div>
<div class="t" style="left:325.00px;top:936.53px;font-size:16.5px;line-height:16.5px;color:#444444;transform:scaleX(0.907);-webkit-text-stroke-width:0px;">RECIBIDAS_GASTOS</div>
<div class="t" style="left:509.00px;top:936.53px;font-size:16.5px;line-height:16.5px;color:#444444;transform:scaleX(0.947);-webkit-text-stroke-width:0px;">BIENES-INVERSIÓN</div>
<div style="position:absolute;left:494px;top:938px;width:1px;height:21px;background:#b0b0b0;"></div>
<div style="position:absolute;left:671px;top:938px;width:1px;height:21px;background:#b0b0b0;"></div>
<svg style="left:704px;top:938px" width="22" height="22"><circle cx="11" cy="11" r="9.5" fill="none" stroke="#6f6f6f" stroke-width="1.3"/><path d="M11 6.5v9M6.5 11h9" stroke="#6f6f6f" stroke-width="1.8"/></svg>
<svg style="left:26px;top:942px" width="40" height="14"><polygon points="8,2.5 8,10.5 3.5,6.5" fill="#c0c0c0"/><polygon points="31,2.5 31,10.5 35.5,6.5" fill="#c0c0c0"/></svg>
<div style="position:absolute;left:1149px;top:942px;width:3px;height:3px;background:#a8a8a8;"></div>
<div style="position:absolute;left:1149px;top:947px;width:3px;height:3px;background:#a8a8a8;"></div>
<div style="position:absolute;left:1149px;top:952px;width:3px;height:3px;background:#a8a8a8;"></div>
<div style="position:absolute;left:1167px;top:939px;width:728px;height:19px;background:#dadada;"></div>
<div style="position:absolute;left:1167px;top:939px;width:290px;height:19px;background:#ffffff;box-sizing:border-box;border:1px solid #8a8a8a"></div>
<div style="position:absolute;left:1185px;top:939px;width:1px;height:19px;background:#8a8a8a;"></div>
<svg style="left:1167px;top:939px" width="19" height="19"><polygon points="12,5 12,14 7,9.5" fill="#606060"/></svg>
<div style="position:absolute;left:1876px;top:939px;width:19px;height:19px;background:#ffffff;box-sizing:border-box;border:1px solid #8a8a8a"></div>
<svg style="left:1876px;top:939px" width="19" height="19"><polygon points="8,5 8,14 13,9.5" fill="#606060"/></svg>
<div style="position:absolute;left:0px;top:963px;width:1920px;height:1px;background:#d4d4d4;"></div>
<div style="position:absolute;left:0px;top:964px;width:1920px;height:26px;background:#f3f3f3;"></div>
<div style="position:absolute;left:0px;top:990px;width:60px;height:1px;background:#1c2e3a;"></div>
<div style="position:absolute;left:490px;top:990px;width:740px;height:1px;background:#1c2e3a;"></div>
<div style="position:absolute;left:1290px;top:990px;width:630px;height:1px;background:#1c2e3a;"></div>
<div class="t" style="left:9.60px;top:969.58px;font-size:14.2px;line-height:14.2px;color:#333333;transform:scaleX(0.861);-webkit-text-stroke-width:0.15px;">Listo</div>
<div class="t" style="left:83.00px;top:969.58px;font-size:14.2px;line-height:14.2px;color:#333333;transform:scaleX(0.915);-webkit-text-stroke-width:0.15px;">Accesibilidad: es necesario investigar</div>
<div style="position:absolute;left:1544px;top:964px;width:50px;height:26px;background:#c8c8c8;"></div>
<div class="t" style="left:1875.00px;top:969.68px;font-size:14.2px;line-height:14.2px;color:#444444;transform:scaleX(0.837);-webkit-text-stroke-width:0.15px;">100 %</div>
<svg style="left:0;top:0" width="1920" height="991"><path d="M66 970.5 A7 7 0 1 0 66 984.5" fill="none" stroke="#444" stroke-width="1.3" stroke-dasharray="2.2 1.5"/><path d="M68.5 969 V977 M66 974.5 L68.5 977 L71 974.5 M68.5 975.4 H76.5 M74 973 L76.5 975.4 L74 977.8" fill="none" stroke="#444" stroke-width="1.1"/><path d="M70.5 978.5 L79 986.5 M79 978.5 L70.5 986.5" stroke="#444" stroke-width="1.6"/><g fill="none" stroke="#555" stroke-width="1.2"><rect x="1561.6" y="969.6" width="15" height="15"/><path d="M1566.6 970 V984 M1571.6 970 V984 M1562 974.6 H1576 M1562 979.6 H1576"/></g><g fill="none" stroke="#555" stroke-width="1.1"><rect x="1610.6" y="969.6" width="15.5" height="14.5"/><rect x="1614.6" y="971.6" width="8" height="10"/><path d="M1616.5 974.5 H1621 M1616.5 976.7 H1621 M1616.5 979 H1621"/></g><g fill="none" stroke="#555" stroke-width="1.1"><rect x="1660.6" y="969.6" width="15.5" height="14.5"/><path d="M1665.5 970 V978 H1670.5 V970"/></g><path d="M1701 976.5 H1711 M1848 976.5 H1857 M1852.5 972 V981" stroke="#555" stroke-width="1.3"/><rect x="1717" y="976" width="125" height="1" fill="#8a8a8a"/><rect x="1777" y="970" width="6" height="14" fill="#6a6a6a"/></svg>
</body></html>
